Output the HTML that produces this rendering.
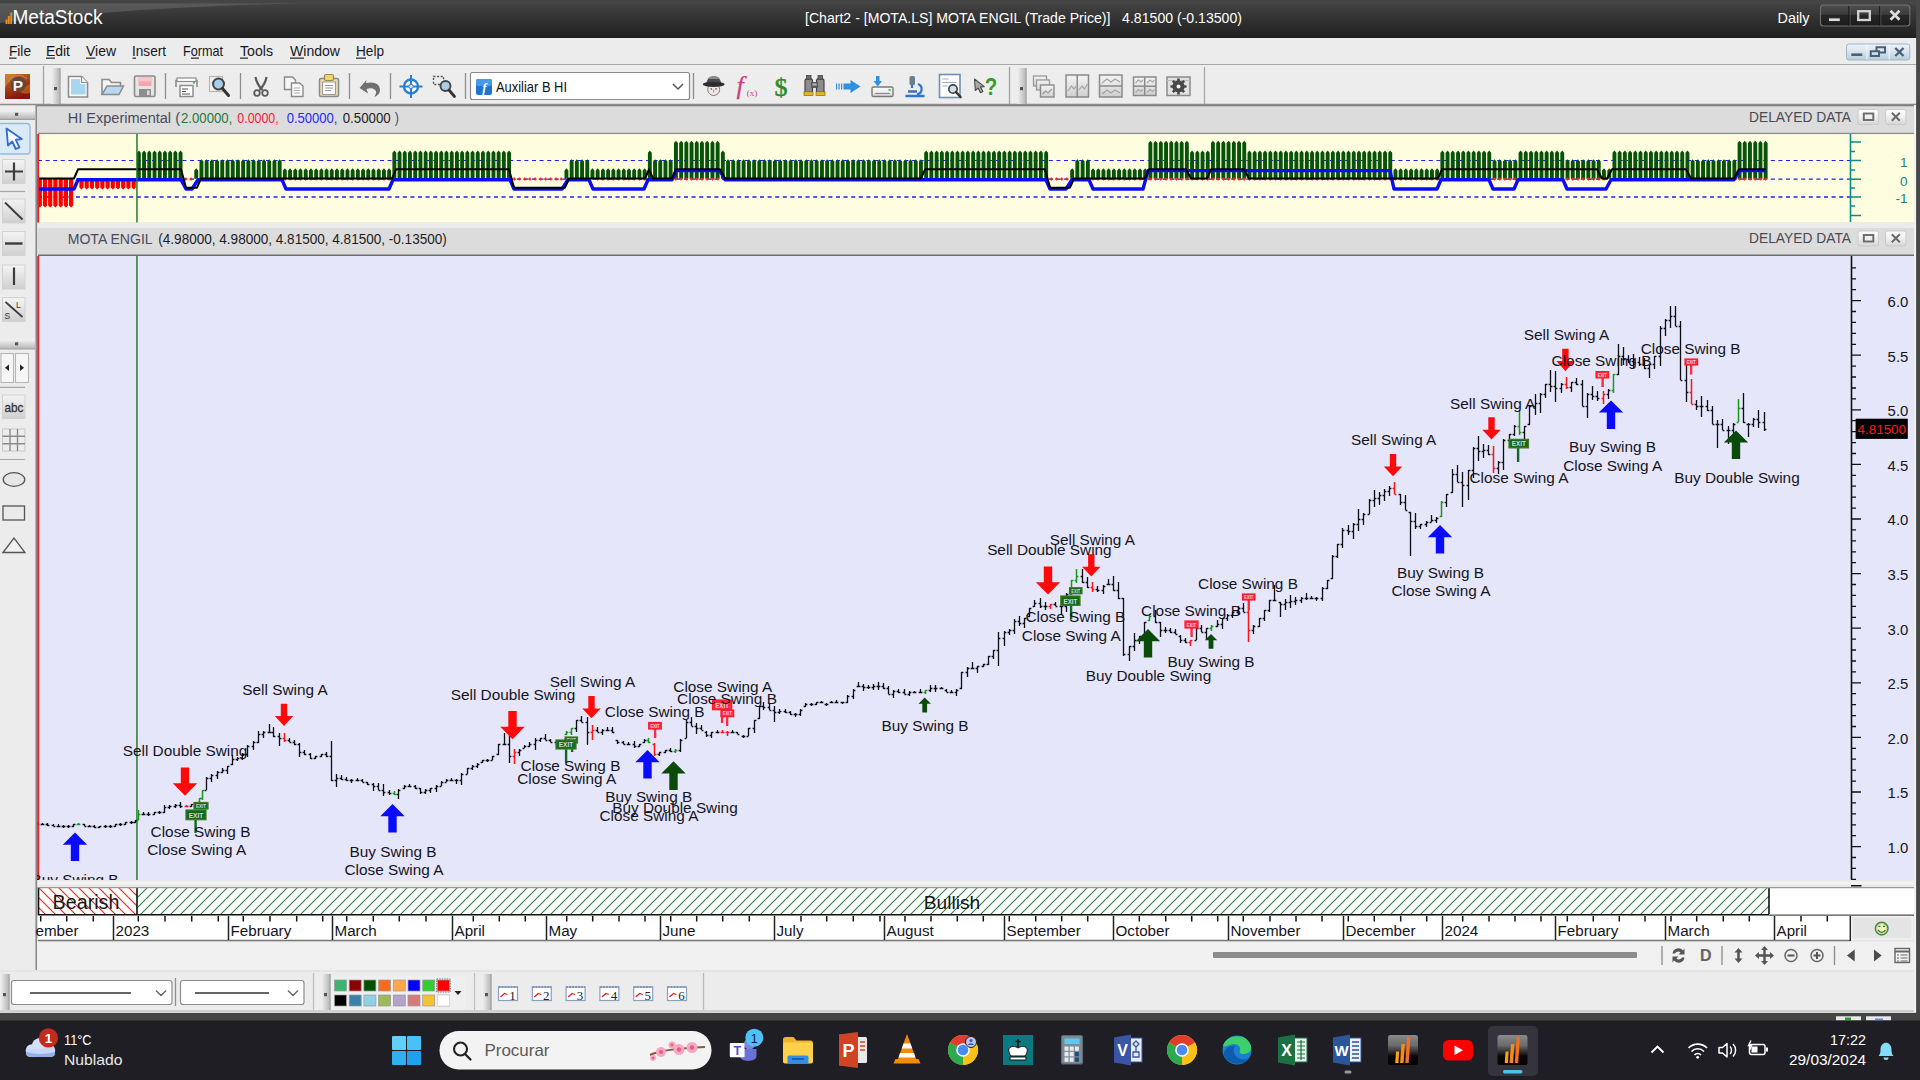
<!DOCTYPE html>
<html><head><meta charset="utf-8"><title>MetaStock</title>
<style>
html,body{margin:0;padding:0;width:1920px;height:1080px;overflow:hidden;background:#f0f0f0;font-family:"Liberation Sans", sans-serif}
</style></head><body>
<svg width="1920" height="1080" viewBox="0 0 1920 1080" style="position:absolute;left:0;top:0;font-family:'Liberation Sans',sans-serif"><defs>
<clipPath id="cpMain"><rect x="37" y="256" width="1814" height="624"/></clipPath>
<pattern id="hR" width="10" height="10" patternUnits="userSpaceOnUse" x="39" y="888"><path d="M-1 -1L11 11M-1 9L1 11M9 -1L11 1" stroke="#ff2020" stroke-width="1.1"/></pattern>
<pattern id="hG" width="10" height="10" patternUnits="userSpaceOnUse" x="137" y="888"><path d="M-1 11L11 -1M-1 1L1 -1M9 11L11 9" stroke="#2a7f3a" stroke-width="1.05"/></pattern>
<linearGradient id="gTitle" x1="0" y1="0" x2="0" y2="1"><stop offset="0" stop-color="#4a4a4a"/><stop offset=".09" stop-color="#4a4a4a"/><stop offset=".1" stop-color="#424242"/><stop offset=".6" stop-color="#2e2e2e"/><stop offset="1" stop-color="#1f1f1f"/></linearGradient>
<linearGradient id="gMS" x1="0" y1="0" x2="0" y2="1"><stop offset="0" stop-color="#8a8a8a"/><stop offset=".35" stop-color="#6a6a6a"/><stop offset=".7" stop-color="#0c0808"/><stop offset="1" stop-color="#050303"/></linearGradient>
<linearGradient id="gWB" x1="0" y1="0" x2="0" y2="1"><stop offset="0" stop-color="#505050"/><stop offset=".45" stop-color="#3a3a3a"/><stop offset=".5" stop-color="#262626"/><stop offset="1" stop-color="#1c1c1c"/></linearGradient>
<linearGradient id="gMDI" x1="0" y1="0" x2="0" y2="1"><stop offset="0" stop-color="#eef3f7"/><stop offset=".5" stop-color="#d8e3ea"/><stop offset="1" stop-color="#b9cddb"/></linearGradient>
<linearGradient id="gP" x1="0" y1="0" x2=".4" y2="1"><stop offset="0" stop-color="#c8701e"/><stop offset=".45" stop-color="#a8481a"/><stop offset="1" stop-color="#86160a"/></linearGradient>
<linearGradient id="gBtn2" x1="0" y1="0" x2="0" y2="1"><stop offset="0" stop-color="#fdfdfd"/><stop offset=".5" stop-color="#efefef"/><stop offset="1" stop-color="#d6d6d6"/></linearGradient>
<linearGradient id="gBtn" x1="0" y1="0" x2="0" y2="1"><stop offset="0" stop-color="#f4f4f4"/><stop offset="1" stop-color="#cfcfcf"/></linearGradient>
<linearGradient id="gGrip" x1="0" y1="0" x2="1" y2="0"><stop offset="0" stop-color="#f2f2f2"/><stop offset=".6" stop-color="#d0d0d0"/><stop offset="1" stop-color="#b8b8b8"/></linearGradient>
<linearGradient id="gGripH" x1="0" y1="0" x2="0" y2="1"><stop offset="0" stop-color="#f2f2f2"/><stop offset=".6" stop-color="#d0d0d0"/><stop offset="1" stop-color="#b8b8b8"/></linearGradient>
</defs><rect x="37" y="105.500" width="1877.500" height="836" fill="#dcdcdc"/><path d="M37 105.800H1915" stroke="#787878" stroke-width="1.500"/><rect x="38" y="106.500" width="1876" height="26.500" fill="#dcdcdc"/><path d="M38 133.300H1914" stroke="#8c8c8c" stroke-width="1.300"/><rect x="38" y="134.3" width="1876" height="88.2" fill="#fffde0"/><rect x="38" y="222.500" width="1876" height="5.500" fill="#ebebeb"/><rect x="38" y="228" width="1876" height="26.500" fill="#dcdcdc"/><path d="M38 255.200H1914" stroke="#6e6e6e" stroke-width="1.500"/><rect x="38" y="256" width="1876" height="624" fill="#e6e6fa"/><rect x="38" y="880" width="1876" height="7.500" fill="#e9e9e9"/><rect x="38" y="881.500" width="1876" height="3" fill="#f4f4f4"/><g font-size="15.2"><text x="67.7" y="122.7" fill="#4a4a5c" textLength="112.3" lengthAdjust="spacingAndGlyphs">HI Experimental (</text><text x="181" y="122.7" fill="#1f7a3a" textLength="51.3" lengthAdjust="spacingAndGlyphs">2.00000,</text><text x="237.3" y="122.7" fill="#ff1a3a" textLength="41.4" lengthAdjust="spacingAndGlyphs">0.0000,</text><text x="286.7" y="122.7" fill="#2a2aff" textLength="50.8" lengthAdjust="spacingAndGlyphs">0.50000,</text><text x="342.7" y="122.7" fill="#222" textLength="48" lengthAdjust="spacingAndGlyphs">0.50000</text><text x="394.8" y="122.7" fill="#4a4a5c" textLength="4.2" lengthAdjust="spacingAndGlyphs">)</text><text x="67.700" y="243.800" fill="#4a4a5c" textLength="85" lengthAdjust="spacingAndGlyphs">MOTA ENGIL</text><text x="158.300" y="243.800" fill="#1c1c24" textLength="288.500" lengthAdjust="spacingAndGlyphs">(4.98000, 4.98000, 4.81500, 4.81500, -0.13500)</text><text x="1749" y="121.8" fill="#4a4a52" textLength="102" lengthAdjust="spacingAndGlyphs">DELAYED DATA</text><text x="1749" y="243" fill="#4a4a52" textLength="102" lengthAdjust="spacingAndGlyphs">DELAYED DATA</text></g><rect x="1858" y="109.5" width="20.500" height="15" rx="2" fill="url(#gBtn2)" stroke="#c9c9c9" stroke-width="1"/><rect x="1885.500" y="109.5" width="20.500" height="15" rx="2" fill="url(#gBtn2)" stroke="#c9c9c9" stroke-width="1"/><rect x="1863.800" y="113.5" width="9.500" height="6.500" fill="none" stroke="#6a6a6a" stroke-width="1.900"/><path d="M1891.800 112.8l8 8M1899.800 112.8l-8 8" stroke="#6a6a6a" stroke-width="2"/><rect x="1858" y="231" width="20.500" height="15" rx="2" fill="url(#gBtn2)" stroke="#c9c9c9" stroke-width="1"/><rect x="1885.500" y="231" width="20.500" height="15" rx="2" fill="url(#gBtn2)" stroke="#c9c9c9" stroke-width="1"/><rect x="1863.800" y="235" width="9.500" height="6.500" fill="none" stroke="#6a6a6a" stroke-width="1.900"/><path d="M1891.800 234.3l8 8M1899.800 234.3l-8 8" stroke="#6a6a6a" stroke-width="2"/><rect x="0" y="0" width="1920" height="38" fill="url(#gTitle)"/><rect x="0" y="0" width="1920" height="3.5" fill="#454545"/><path d="M0 3.500H300C210 5 90 12 0 23Z" fill="#7a7a7a" fill-opacity=".42"/><path d="M6.5 24V19.5M8.8 24V16M11.2 24V12.5" stroke="#f08a1c" stroke-width="1.9"/><text x="12.5" y="23.6" font-size="19.5" fill="#fff" textLength="90" lengthAdjust="spacingAndGlyphs">MetaStock</text><text x="805" y="22.6" font-size="15" fill="#fff" textLength="437" lengthAdjust="spacingAndGlyphs" xml:space="preserve">[Chart2 - [MOTA.LS] MOTA ENGIL (Trade Price)]   4.81500 (-0.13500)</text><text x="1777.5" y="22.8" font-size="15" fill="#fff" textLength="32" lengthAdjust="spacingAndGlyphs">Daily</text><rect x="1820.500" y="5" width="89.300" height="21" rx="3" fill="url(#gWB)" stroke="#707070" stroke-width="1.100"/><path d="M1849 6V25.500M1879.800 6V25.500" stroke="#141414" stroke-width="1.200"/><path d="M1850.100 6V25.500M1880.900 6V25.500" stroke="#5a5a5a" stroke-width=".8"/><path d="M1829 19.700h10.800" stroke="#dcdcdc" stroke-width="2.700"/><rect x="1858.200" y="11.200" width="11.600" height="8.800" fill="none" stroke="#d4d4d4" stroke-width="2.300"/><path d="M1890.500 10.700l9 9M1899.500 10.700l-9 9" stroke="#dcdcdc" stroke-width="2.700"/><rect x="0" y="38" width="1920" height="26.5" fill="#ececec"/><path d="M0 64.5H1920" stroke="#a8a8a8" stroke-width="1.2"/><g font-size="14.6" fill="#16161c"><text x="9" y="56" textLength="22" lengthAdjust="spacingAndGlyphs">File</text><rect x="9" y="57.6" width="7.5" height="1.1" fill="#16161c"/><text x="46" y="56" textLength="24" lengthAdjust="spacingAndGlyphs">Edit</text><rect x="46" y="57.6" width="9" height="1.1" fill="#16161c"/><text x="86" y="56" textLength="30" lengthAdjust="spacingAndGlyphs">View</text><rect x="86" y="57.6" width="9.5" height="1.1" fill="#16161c"/><text x="132" y="56" textLength="34" lengthAdjust="spacingAndGlyphs">Insert</text><rect x="132.5" y="57.6" width="3.5" height="1.1" fill="#16161c"/><text x="183" y="56" textLength="40" lengthAdjust="spacingAndGlyphs">Format</text><rect x="191" y="57.6" width="8" height="1.1" fill="#16161c"/><text x="240" y="56" textLength="33" lengthAdjust="spacingAndGlyphs">Tools</text><rect x="240" y="57.6" width="8" height="1.1" fill="#16161c"/><text x="290" y="56" textLength="50" lengthAdjust="spacingAndGlyphs">Window</text><rect x="290" y="57.6" width="14" height="1.1" fill="#16161c"/><text x="356" y="56" textLength="28" lengthAdjust="spacingAndGlyphs">Help</text><rect x="356" y="57.6" width="10" height="1.1" fill="#16161c"/></g><rect x="1846.500" y="44" width="63.300" height="16" rx="2.500" fill="url(#gMDI)" stroke="#9db4c6" stroke-width="1"/><path d="M1867 44.500V59.500M1889.200 44.500V59.500" stroke="#f4f8fa" stroke-width="1"/><path d="M1851.300 54.700h11" stroke="#44607a" stroke-width="2.600"/><path d="M1870.800 51.300h8.200v4.700h-8.200zM1876.500 50.500v-3.300h8.500v5.300h-5" fill="none" stroke="#44607a" stroke-width="2"/><path d="M1895.300 48l8.200 8M1903.500 48l-8.200 8" stroke="#44607a" stroke-width="2.400"/><rect x="0" y="65" width="1920" height="40" fill="#ededed"/><path d="M0 104.6H1920" stroke="#8a8a8a" stroke-width="1.6"/><rect x="5" y="74" width="25" height="25" fill="url(#gP)"/><path d="M5 74h12c-5 3-9 8-12 14z" fill="#e08a2a" fill-opacity=".55"/><path d="M30 84v9c-6 2-12-1-15-6c5 2 10 0 15-3z" fill="#e0801a" fill-opacity=".5"/><circle cx="18.5" cy="84.5" r="7.8" fill="#4a4644" fill-opacity=".72"/><path d="M8 82c4-7 13-9 19-3" stroke="#b8a898" stroke-opacity=".5" stroke-width="1.2" fill="none"/><text x="18" y="91.3" font-size="15.5" font-weight="bold" fill="#f4f4f4" text-anchor="middle">P</text><path d="M43.5 66V104" stroke="#a2a2a2" stroke-width="1.3"/><rect x="51" y="68" width="8.5" height="36" fill="url(#gGrip)"/><path d="M60 68V104" stroke="#9c9c9c" stroke-width="1.3"/><rect x="54" y="87.0" width="3" height="3.2" fill="#555"/><path d="M165.5 73V99" stroke="#8e8e8e" stroke-width="1.3"/><path d="M240.5 73V99" stroke="#8e8e8e" stroke-width="1.3"/><path d="M349.5 73V99" stroke="#8e8e8e" stroke-width="1.3"/><path d="M390.5 73V99" stroke="#8e8e8e" stroke-width="1.3"/><path d="M465.5 73V99" stroke="#8e8e8e" stroke-width="1.3"/><path d="M68.5 76.5h13l6 6v14.5h-19z" fill="#fcfcfc" stroke="#8c8c8c" stroke-width="1.6"/><path d="M81.5 76.5v6h6" fill="#f4f4f4" stroke="#8c8c8c" stroke-width="1.2"/><path d="M71 79h9v5h5.500v10.500h-14.500z" fill="#a8d6ee"/><path d="M102 94V79.500h7l2.500 3h9v4" fill="#f4f4f4" stroke="#8c8c8c" stroke-width="1.6"/><path d="M102 94.500l5-8.500h16.500l-4.500 8.500z" fill="#b9d7ee" stroke="#8c8c8c" stroke-width="1.5"/><rect x="134.5" y="76" width="20.500" height="20.500" rx="1.500" fill="#e4e4e4" stroke="#8c8c8c" stroke-width="1.6"/><rect x="138.500" y="77.500" width="13" height="8.500" fill="#f4a6ae"/><rect x="138.500" y="77.500" width="13" height="4" fill="#f8c4c8"/><rect x="139" y="89" width="12" height="7" fill="#8e8e8e"/><rect x="147" y="90.500" width="2.500" height="4.500" fill="#ddd"/><path d="M176 87v-6.500h21v6.500" fill="#f2f2f2" stroke="#8c8c8c" stroke-width="1.6"/><rect x="177" y="78" width="19" height="3.500" fill="#fff" stroke="#8c8c8c" stroke-width="1.2"/><rect x="180" y="85.500" width="13" height="11" fill="#fff" stroke="#8c8c8c" stroke-width="1.5"/><path d="M182 89h6M182 91.500h4M182 94h8" stroke="#555" stroke-width="1"/><rect x="193" y="82" width="2" height="1.500" fill="#3db54a"/><rect x="209.500" y="76.500" width="13" height="15" fill="#efefef" stroke="#b5b5b5" stroke-width="1.2"/><circle cx="218.500" cy="84" r="5.500" fill="#a9cdea" stroke="#444" stroke-width="2"/><path d="M222.500 88.500l6 7" stroke="#333" stroke-width="3" stroke-linecap="round"/><path d="M255.500 77c1 6 3 9 7 13M266.500 77c-1 6-3 9-7 13" stroke="#5a5a5a" stroke-width="2.200" fill="none"/><circle cx="257" cy="93" r="2.800" fill="none" stroke="#5a5a5a" stroke-width="1.800"/><circle cx="265" cy="93" r="2.800" fill="none" stroke="#5a5a5a" stroke-width="1.800"/><path d="M284.500 77h8l3 3v9.500h-11z" fill="#f6f6f6" stroke="#8a8a8a" stroke-width="1.4"/><path d="M291.500 83h8l3.500 3v10.500h-11.500z" fill="#fafafa" stroke="#8a8a8a" stroke-width="1.4"/><path d="M294 88h6M294 90.500h6M294 93h6" stroke="#aaa" stroke-width="1"/><rect x="319.500" y="78.500" width="19" height="18" rx="1.500" fill="#e9dcb0" stroke="#8a8a8a" stroke-width="1.5"/><rect x="324.500" y="74.500" width="9" height="6" rx="1.500" fill="#f3d66b" stroke="#9a8a4a" stroke-width="1.2"/><rect x="322.500" y="82" width="13" height="12.500" fill="#fbfbfb" stroke="#9a9a9a" stroke-width="1"/><path d="M325 85.500h8M325 88h8M325 90.500h6" stroke="#999" stroke-width="1"/><path d="M366 83c8-2 14.500 1 14 7.500c-.3 3-2.500 5.500-6 6.500c2.500-3 3-6 .5-7.500c-2-1.500-5-1.500-8-.5l1.500 4.500l-8.500-5.500l7-8z" fill="#707070"/><circle cx="411" cy="86.500" r="7" fill="#fff" stroke="#2a7fd0" stroke-width="2.400"/><path d="M411 75v23M399.500 86.500h23" stroke="#2a7fd0" stroke-width="2"/><circle cx="411" cy="86.500" r="2.200" fill="#cfe4f6" stroke="#2a7fd0" stroke-width="1"/><rect x="433.500" y="76.500" width="10" height="8" fill="none" stroke="#555" stroke-width="1.400" stroke-dasharray="2 1.600"/><circle cx="445.500" cy="86" r="5" fill="#a9cdea" stroke="#444" stroke-width="1.900"/><path d="M449 90l5.500 6.500" stroke="#333" stroke-width="2.800" stroke-linecap="round"/><circle cx="713.700" cy="89.500" r="6" fill="#f3e6e2" stroke="#8a7a78" stroke-width="1"/><path d="M706.500 84c-.5-10 15-10 14.500 0z" fill="#4c4c4c"/><path d="M707.500 79c2-4 10.500-4 12.500 0z" fill="#8a8a8a"/><ellipse cx="713.700" cy="84.300" rx="11" ry="2.600" fill="#2e2e2e"/><circle cx="711.300" cy="88.800" r=".9" fill="#3a6ab0"/><circle cx="716" cy="88.800" r=".9" fill="#3a6ab0"/><path d="M713.700 89.500v3" stroke="#a08a86" stroke-width=".9"/><text x="736.500" y="93.500" font-size="26" font-style="italic" fill="#d23a80" stroke="#d23a80" stroke-width=".25" font-family="Liberation Serif, serif">f</text><text x="746.800" y="96" font-size="9" fill="#d23a80" font-family="Liberation Serif, serif">(x)</text><text x="781" y="95.500" font-size="26" fill="#2a8a2a" stroke="#2a8a2a" stroke-width=".5" text-anchor="middle" font-family="Liberation Serif, serif">$</text><rect x="805" y="78.500" width="7.500" height="15" rx="2.500" fill="#8c8c8c" stroke="#444" stroke-width="1.200"/><rect x="816.500" y="78.500" width="7.500" height="15" rx="2.500" fill="#8c8c8c" stroke="#444" stroke-width="1.200"/><rect x="811" y="82" width="7" height="6" fill="#5a5a5a"/><rect x="812.500" y="83.500" width="4" height="2" fill="#bdbdbd"/><rect x="806.500" y="75.500" width="4.500" height="4" fill="#6a6a6a" stroke="#444" stroke-width=".8"/><rect x="818" y="75.500" width="4.500" height="4" fill="#6a6a6a" stroke="#444" stroke-width=".8"/><rect x="804" y="91.800" width="9" height="3.600" fill="#e8b820" stroke="#7a6a20" stroke-width=".7"/><rect x="816" y="91.800" width="9" height="3.600" fill="#e8b820" stroke="#7a6a20" stroke-width=".7"/><path d="M836 83.500h1.200v6h-1.200zM838.500 83.500h1.200v6h-1.200zM841 83.500h1.200v6h-1.200zM843.500 83.500h7v-3.500l10 6.500l-10 6.500v-3.500h-7z" fill="#2f8fe0"/><rect x="872" y="87" width="21" height="9.500" rx="1.500" fill="url(#gBtn2)" stroke="#7a7a7a" stroke-width="1.400"/><rect x="888.500" y="89" width="2.200" height="1.800" fill="#4aba4a"/><path d="M875 93.500h15" stroke="#8a8a8a" stroke-width="1.200"/><path d="M876 76h3.500v5h2.500l-4.200 5.500l-4.300-5.500h2.500z" fill="#2f8fe0"/><rect x="909.500" y="76" width="5.500" height="9" rx="1.500" fill="#6b7f94"/><path d="M912 85v3M918 84c5 2 5 9-1 10.500" stroke="#2f74c8" stroke-width="2.200" fill="none"/><path d="M905.500 96h19M908 91.500h9" stroke="#2f74c8" stroke-width="2.400"/><rect x="939.500" y="74.500" width="20.500" height="23" fill="#fff" stroke="#6f8fb5" stroke-width="1.600"/><path d="M942.500 79h6M942.500 82.500h14M942.500 86h5" stroke="#9ab0c8" stroke-width="1.200"/><circle cx="953" cy="89" r="4.200" fill="#cfe0f0" stroke="#444" stroke-width="1.700"/><path d="M956 92l4.500 5" stroke="#333" stroke-width="2.500" stroke-linecap="round"/><path d="M974.500 79l.800 11.500l2.800-2.500l2.400 4.800l2.400-1.200l-2.400-4.700l3.800-.3z" fill="#a8a8a8" stroke="#4a4a4a" stroke-width="1.100" stroke-linejoin="round"/><text x="991" y="94.800" font-size="24.500" font-weight="bold" fill="#3a9a2e" text-anchor="middle" textLength="12.500" lengthAdjust="spacingAndGlyphs">?</text><rect x="1033.500" y="76" width="13" height="10" fill="url(#gBtn)" stroke="#9a9a9a" stroke-width="1.300"/><rect x="1036.500" y="80" width="13" height="10" fill="url(#gBtn)" stroke="#9a9a9a" stroke-width="1.300"/><rect x="1040.500" y="85" width="13.500" height="12" fill="url(#gBtn)" stroke="#8a8a8a" stroke-width="1.400"/><path d="M1042.500 94l3-3l2.500 2l4-4" stroke="#9a9a9a" stroke-width="1.200" fill="none"/><rect x="1066" y="75" width="22.500" height="22" fill="url(#gBtn)" stroke="#8a8a8a" stroke-width="1.500"/><path d="M1077.200 75v22" stroke="#8a8a8a" stroke-width="1.500"/><path d="M1068 91l3.500-5l2.500 3l2-3M1079 90l3-4l2.500 3l3-5" stroke="#a5a5a5" stroke-width="1.200" fill="none"/><rect x="1099.500" y="75" width="22.500" height="22" fill="url(#gBtn)" stroke="#8a8a8a" stroke-width="1.500"/><path d="M1099.500 86h22.500" stroke="#8a8a8a" stroke-width="1.500"/><path d="M1102 83l5-4l4 3l4-3l5 3M1102 94l5-4l4 3l4-3l5 3" stroke="#a5a5a5" stroke-width="1.200" fill="none"/><rect x="1133.500" y="77" width="22.500" height="18.500" fill="url(#gBtn)" stroke="#8a8a8a" stroke-width="1.500"/><path d="M1144.700 77v18.500M1133.500 86.200h22.500" stroke="#8a8a8a" stroke-width="1.500"/><path d="M1135.500 83l3-3l2.500 2l2-2M1147 83l3-3l2.500 2l2-2M1135.500 92.500l3-3l2.500 2l2-2M1147 92.500l3-3l2.500 2l2-2" stroke="#a5a5a5" stroke-width="1.100" fill="none"/><rect x="1167" y="77" width="23" height="18.500" fill="#e2e2e2" stroke="#8a8a8a" stroke-width="1.500"/><path d="M1167 80.500h23" stroke="#bbb" stroke-width="1"/><circle cx="1178.500" cy="86.500" r="4.600" fill="none" stroke="#484848" stroke-width="3"/><path d="M1178.500 78.500v16M1170.500 86.500h16M1172.800 80.800l11.400 11.400M1184.200 80.800l-11.400 11.400" stroke="#484848" stroke-width="2.600"/><circle cx="1178.500" cy="86.500" r="2" fill="#f4f4f4"/><rect x="470.5" y="72.5" width="219" height="27" rx="2" fill="#fff" stroke="#8a8a8a" stroke-width="1.2"/><rect x="476" y="79" width="16" height="16" rx="2" fill="#1f74d4"/><rect x="476" y="79" width="16" height="7" rx="2" fill="#4a98ea"/><text x="484.5" y="92" font-size="13" font-style="italic" font-weight="bold" fill="#fff" text-anchor="middle" font-family="Liberation Serif, serif">f</text><text x="496" y="91.5" font-size="14.6" fill="#111" textLength="71" lengthAdjust="spacingAndGlyphs">Auxiliar B HI</text><path d="M673 84l5 5l5-5" fill="none" stroke="#555" stroke-width="1.5"/><path d="M693.5 73V99" stroke="#8e8e8e" stroke-width="1.3"/><path d="M1009.5 67V104" stroke="#a2a2a2" stroke-width="1.3"/><rect x="1017" y="68" width="8.5" height="36" fill="url(#gGrip)"/><path d="M1026 68V104" stroke="#9c9c9c" stroke-width="1.3"/><rect x="1020" y="87.0" width="3" height="3.2" fill="#555"/><path d="M1204.5 67V104" stroke="#a8a8a8" stroke-width="1.3"/><rect x="0" y="105.500" width="36" height="865" fill="#ececec"/><path d="M36.200 105V970" stroke="#8c8c8c" stroke-width="1.600"/><rect x="0" y="110" width="35" height="9" fill="url(#gGripH)"/><path d="M0 119.3H35" stroke="#a0a0a0" stroke-width="1.200"/><rect x="15" y="112.8" width="3.200" height="3" fill="#555"/><rect x="0" y="339.5" width="35" height="9" fill="url(#gGripH)"/><path d="M0 348.8H35" stroke="#a0a0a0" stroke-width="1.200"/><rect x="15" y="342.3" width="3.200" height="3" fill="#555"/><rect x="-2" y="123.500" width="32" height="30.500" rx="3" fill="#dbeaf9" stroke="#8fbbe8" stroke-width="1.300"/><path d="M6.500 128.500l1.500 17l4.200-4l3.600 7.500l3.600-1.700l-3.600-7.500l6-.8z" fill="#fff" stroke="#2f6fd0" stroke-width="1.900" stroke-linejoin="round"/><rect x="2.500" y="159.5" width="22.500" height="24" fill="url(#gBtn)" stroke="#d2d2d2" stroke-width="1"/><path d="M14 162.500v18M5 171.500h18" stroke="#3c3c3c" stroke-width="2.200"/><path d="M0 191.500H25" stroke="#a5a5a5" stroke-width="1.200"/><rect x="2.500" y="199" width="22.500" height="24" fill="url(#gBtn)" stroke="#d2d2d2" stroke-width="1"/><path d="M5 202.500l17.500 17" stroke="#3c3c3c" stroke-width="1.900"/><rect x="2.500" y="231.5" width="22.500" height="24" fill="url(#gBtn)" stroke="#d2d2d2" stroke-width="1"/><path d="M5 243.500h17.500" stroke="#3c3c3c" stroke-width="2.400"/><rect x="2.500" y="265" width="22.500" height="24" fill="url(#gBtn)" stroke="#d2d2d2" stroke-width="1"/><path d="M14 267.500v17.500" stroke="#3c3c3c" stroke-width="2.200"/><rect x="2.500" y="297.5" width="22.500" height="24" fill="url(#gBtn)" stroke="#d2d2d2" stroke-width="1"/><path d="M5.500 302l17 15" stroke="#3c3c3c" stroke-width="1.700"/><text x="16" y="308" font-size="8.500" fill="#333">L</text><text x="4.500" y="319" font-size="8.500" fill="#333">S</text><rect x="1" y="353.500" width="12.500" height="29" fill="#f6f6f6" stroke="#b8b8b8" stroke-width="1.100"/><rect x="15.500" y="353.500" width="13" height="29" fill="#f6f6f6" stroke="#b8b8b8" stroke-width="1.100"/><path d="M9 364.500v6.500l-4-3.200zM20 364.500v6.500l4-3.200z" fill="#222"/><rect x="2.500" y="395" width="22.500" height="23.5" fill="url(#gBtn)" stroke="#d2d2d2" stroke-width="1"/><text x="14" y="412" font-size="13" fill="#333" stroke="#333" stroke-width=".3" text-anchor="middle" textLength="19" lengthAdjust="spacingAndGlyphs">abc</text><rect x="2.5" y="429" width="22.5" height="22" fill="#ececec" stroke="#c8c8c8" stroke-width="1"/><path d="M2.5 436.3h22.5M2.5 443.700h22.5M10 429v22M17.5 429v22" stroke="#8a8a8a" stroke-width="1.4"/><path d="M0 459.5H25M0 387.3H25" stroke="#a5a5a5" stroke-width="1.2"/><ellipse cx="14" cy="479.500" rx="10.800" ry="6.800" fill="#e6e6e6" stroke="#555" stroke-width="1.300"/><rect x="3" y="506" width="21.500" height="14" fill="#eaeaea" stroke="#555" stroke-width="1.300"/><path d="M3 552.500l11-14.500l11 14.500z" fill="#f0f0f0" stroke="#555" stroke-width="1.300"/><rect x="37" y="941.500" width="1877.500" height="29" fill="#f0f0f0"/><rect x="1850.500" y="916" width="63.500" height="24.500" fill="#e9e9e9"/><rect x="1852" y="917" width="60" height="22" fill="#e4e4e4" stroke="#f6f6f6" stroke-width="1"/><circle cx="1881.700" cy="928.600" r="6.300" fill="#eef0cc" stroke="#3c8a5a" stroke-width="1.500"/><circle cx="1881.700" cy="928.600" r="5" fill="none" stroke="#d8c84a" stroke-width="1"/><path d="M1878 930c2 3.200 5.400 3.200 7.400 0" stroke="#2a7a3a" stroke-width="1.300" fill="none"/><path d="M1878.500 926.400h2M1883 926.400h2" stroke="#2a7a3a" stroke-width="1.300"/><rect x="1213" y="952" width="424" height="6" rx="1" fill="#8c8c8c"/><path d="M1662 946V965" stroke="#8a8a8a" stroke-width="1.300"/><path d="M1722 946V965" stroke="#8a8a8a" stroke-width="1.300"/><path d="M1834.5 946V965" stroke="#8a8a8a" stroke-width="1.300"/><path d="M1672.500 953.500a6 6 0 0 1 10.500-3l1.500-2v6h-6l2-2a3.600 3.600 0 0 0-5.500 1zM1684.500 957.500a6 6 0 0 1-10.500 3l-1.500 2v-6h6l-2 2a3.600 3.600 0 0 0 5.500-1z" fill="#555"/><text x="1705.800" y="961" font-size="16" font-weight="bold" fill="#626262" text-anchor="middle">D</text><path d="M1738.500 948l4 4.500h-2.700v6h2.700l-4 4.500l-4-4.500h2.700v-6h-2.700z" fill="#555"/><path d="M1764.500 946l3.500 4h-2.300v4.300h4.300v-2.300l4 3.500l-4 3.500v-2.300h-4.300v4.300h2.300l-3.500 4l-3.500-4h2.300v-4.300h-4.300v2.300l-4-3.500l4-3.500v2.300h4.300v-4.300h-2.300z" fill="#555"/><circle cx="1791" cy="955.500" r="6" fill="none" stroke="#666" stroke-width="1.500"/><path d="M1787.500 955.500h7" stroke="#555" stroke-width="2"/><circle cx="1817" cy="955.500" r="6" fill="none" stroke="#666" stroke-width="1.500"/><path d="M1813.500 955.500h7M1817 952v7" stroke="#555" stroke-width="2"/><path d="M1854.700 949.500v12l-7.700-6zM1874 949.500v12l7.700-6z" fill="#4c4c4c"/><rect x="1895" y="948.500" width="14.500" height="14" fill="#f4f4f4" stroke="#666" stroke-width="1.400"/><path d="M1895 951.500h14.500" stroke="#666" stroke-width="2"/><path d="M1897 955h2M1900.500 955h7M1897 958h2M1900.500 958h7M1897 961h2M1900.500 961h7" stroke="#666" stroke-width="1.100"/><rect x="0" y="970.500" width="1915" height="41.500" fill="#ececec"/><path d="M0 971H1915" stroke="#dcdcdc" stroke-width="1.200"/><path d="M0 1011.300H1915" stroke="#b4b4b4" stroke-width="1.400"/><rect x="1914" y="105" width="2.200" height="907" fill="#f2f2f2"/><rect x="0" y="974" width="8.5" height="36" fill="url(#gGrip)"/><path d="M9 974V1010" stroke="#9c9c9c" stroke-width="1.3"/><rect x="3" y="993.0" width="3" height="3.2" fill="#555"/><rect x="11.5" y="980.500" width="160.5" height="24" rx="2.500" fill="#fff" stroke="#8e8e8e" stroke-width="1.200"/><rect x="180.5" y="980.500" width="123.5" height="24" rx="2.500" fill="#fff" stroke="#8e8e8e" stroke-width="1.200"/><path d="M30 993h101" stroke="#333" stroke-width="1.300"/><path d="M195 993h74" stroke="#333" stroke-width="1.300"/><path d="M156 990.500l5 5l5-5M288 990.500l5 5l5-5" fill="none" stroke="#666" stroke-width="1.400"/><path d="M175.500 978V1006" stroke="#8e8e8e" stroke-width="1.300"/><path d="M313.500 973V1010" stroke="#c0c0c0" stroke-width="1.300"/><rect x="321" y="974" width="8.5" height="36" fill="url(#gGrip)"/><path d="M330 974V1010" stroke="#9c9c9c" stroke-width="1.3"/><rect x="324" y="993.0" width="3" height="3.2" fill="#555"/><rect x="331.500" y="976.500" width="134" height="33" fill="#efefef"/><rect x="334.5" y="980" width="12" height="11" fill="#3cb371" stroke="#9c9c9c" stroke-width=".7"/><rect x="349.2" y="980" width="12" height="11" fill="#8b0000" stroke="#9c9c9c" stroke-width=".7"/><rect x="363.9" y="980" width="12" height="11" fill="#005000" stroke="#9c9c9c" stroke-width=".7"/><rect x="378.6" y="980" width="12" height="11" fill="#ff6a1a" stroke="#9c9c9c" stroke-width=".7"/><rect x="393.3" y="980" width="12" height="11" fill="#ffa64d" stroke="#9c9c9c" stroke-width=".7"/><rect x="408" y="980" width="12" height="11" fill="#0000ff" stroke="#9c9c9c" stroke-width=".7"/><rect x="422.7" y="980" width="12" height="11" fill="#32cd32" stroke="#9c9c9c" stroke-width=".7"/><rect x="437.4" y="980" width="12" height="11" fill="#ff0000" stroke="#9c9c9c" stroke-width=".7"/><rect x="334.5" y="995" width="12" height="11" fill="#000000" stroke="#9c9c9c" stroke-width=".7"/><rect x="349.2" y="995" width="12" height="11" fill="#3a80a8" stroke="#9c9c9c" stroke-width=".7"/><rect x="363.9" y="995" width="12" height="11" fill="#8fd0e4" stroke="#9c9c9c" stroke-width=".7"/><rect x="378.6" y="995" width="12" height="11" fill="#9cbb58" stroke="#9c9c9c" stroke-width=".7"/><rect x="393.3" y="995" width="12" height="11" fill="#b3a2cc" stroke="#9c9c9c" stroke-width=".7"/><rect x="408" y="995" width="12" height="11" fill="#d67b7b" stroke="#9c9c9c" stroke-width=".7"/><rect x="422.7" y="995" width="12" height="11" fill="#f4c430" stroke="#9c9c9c" stroke-width=".7"/><rect x="437.4" y="995" width="12" height="11" fill="#ffffff" stroke="#9c9c9c" stroke-width=".7"/><rect x="436.700" y="979" width="13.500" height="13" fill="none" stroke="#777" stroke-width="1" stroke-dasharray="1.500 1"/><rect x="437.400" y="995" width="12" height="11" fill="#fff" stroke="#ddd" stroke-width=".8"/><path d="M454.500 991h7l-3.500 4z" fill="#222"/><path d="M474.500 973V1010" stroke="#c0c0c0" stroke-width="1.300"/><rect x="482" y="974" width="8.5" height="36" fill="url(#gGrip)"/><path d="M491 974V1010" stroke="#9c9c9c" stroke-width="1.3"/><rect x="485" y="993.0" width="3" height="3.2" fill="#555"/><rect x="498.5" y="987" width="19" height="13.500" fill="#fff" stroke="#8aa0c0" stroke-width="1.200"/><path d="M498.5 987h19" stroke="#7a96c0" stroke-width="2" stroke-dasharray="2 1"/><path d="M500.5 997l4-3.500l3 1" stroke="#e02020" stroke-width="1.300" fill="none"/><text x="512.5" y="999.500" font-size="13" fill="#222" text-anchor="middle" font-family="Liberation Serif, serif">1</text><rect x="532.3" y="987" width="19" height="13.500" fill="#fff" stroke="#8aa0c0" stroke-width="1.200"/><path d="M532.3 987h19" stroke="#7a96c0" stroke-width="2" stroke-dasharray="2 1"/><path d="M534.3 997l4-3.500l3 1" stroke="#e02020" stroke-width="1.300" fill="none"/><text x="546.3" y="999.500" font-size="13" fill="#222" text-anchor="middle" font-family="Liberation Serif, serif">2</text><rect x="566.1" y="987" width="19" height="13.500" fill="#fff" stroke="#8aa0c0" stroke-width="1.200"/><path d="M566.1 987h19" stroke="#7a96c0" stroke-width="2" stroke-dasharray="2 1"/><path d="M568.1 997l4-3.500l3 1" stroke="#e02020" stroke-width="1.300" fill="none"/><text x="580.1" y="999.500" font-size="13" fill="#222" text-anchor="middle" font-family="Liberation Serif, serif">3</text><rect x="599.9" y="987" width="19" height="13.500" fill="#fff" stroke="#8aa0c0" stroke-width="1.200"/><path d="M599.9 987h19" stroke="#7a96c0" stroke-width="2" stroke-dasharray="2 1"/><path d="M601.9 997l4-3.500l3 1" stroke="#e02020" stroke-width="1.300" fill="none"/><text x="613.9" y="999.500" font-size="13" fill="#222" text-anchor="middle" font-family="Liberation Serif, serif">4</text><rect x="633.7" y="987" width="19" height="13.500" fill="#fff" stroke="#8aa0c0" stroke-width="1.200"/><path d="M633.7 987h19" stroke="#7a96c0" stroke-width="2" stroke-dasharray="2 1"/><path d="M635.7 997l4-3.500l3 1" stroke="#e02020" stroke-width="1.300" fill="none"/><text x="647.7" y="999.500" font-size="13" fill="#222" text-anchor="middle" font-family="Liberation Serif, serif">5</text><rect x="667.5" y="987" width="19" height="13.500" fill="#fff" stroke="#8aa0c0" stroke-width="1.200"/><path d="M667.5 987h19" stroke="#7a96c0" stroke-width="2" stroke-dasharray="2 1"/><path d="M669.5 997l4-3.500l3 1" stroke="#e02020" stroke-width="1.300" fill="none"/><text x="681.5" y="999.500" font-size="13" fill="#222" text-anchor="middle" font-family="Liberation Serif, serif">6</text><path d="M703.500 973V1010" stroke="#b8b8b8" stroke-width="1.300"/><rect x="1916.100" y="0" width="3.900" height="1021" fill="#484848"/><rect x="0" y="1012" width="1920" height="9" fill="#444444"/><rect x="0" y="1011.600" width="1916" height="1.200" fill="#fafafa"/><rect x="0" y="1020.500" width="1920" height="60" fill="#201e25"/><rect x="1836" y="1016.300" width="25" height="3.900" fill="#e4ece4"/><rect x="1866" y="1016.300" width="25" height="3.900" fill="#e6e8ee"/><rect x="1845" y="1017.500" width="6" height="2.700" fill="#2a9a2a"/><rect x="1875" y="1018.500" width="8" height="1.700" fill="#6a8ad0"/><circle cx="32" cy="1050.500" r="6.300" fill="#d3e0f8"/><circle cx="40.500" cy="1046.500" r="8.800" fill="#d3e0f8"/><circle cx="49" cy="1050.500" r="6.200" fill="#c6d6f5"/><rect x="26" y="1049" width="29" height="7.700" rx="3.800" fill="#c6d6f5"/><path d="M26.500 1052c8 2.500 20 2.500 28.500 0c.5 3-1.500 4.700-4 4.700h-21c-2.500 0-4-2-3.500-4.700z" fill="#8fb0ea"/><circle cx="48.400" cy="1037.900" r="9.600" fill="#c42b1c"/><text x="48.400" y="1042.800" font-size="13.500" font-weight="bold" fill="#fff" text-anchor="middle">1</text><text x="64" y="1045" font-size="15" fill="#fff" textLength="27.500" lengthAdjust="spacingAndGlyphs">11°C</text><text x="64" y="1065" font-size="15" fill="#e8e8e8" textLength="58.500" lengthAdjust="spacingAndGlyphs">Nublado</text><rect x="392" y="1036" width="14" height="14" rx="1" fill="#5ed0fb"/><rect x="407" y="1036" width="14" height="14" rx="1" fill="#46c2f8"/><rect x="392" y="1051" width="14" height="14" rx="1" fill="#2fb0f2"/><rect x="407" y="1051" width="14" height="14" rx="1" fill="#1fa2ee"/><rect x="439.500" y="1031" width="272" height="38.500" rx="19.200" fill="#f3f3f3"/><circle cx="460.500" cy="1049" r="6.500" fill="none" stroke="#222" stroke-width="2.100"/><path d="M465 1054l5.500 5.500" stroke="#222" stroke-width="2.300" stroke-linecap="round"/><text x="484.500" y="1056" font-size="16.500" fill="#5a5a5a" textLength="65" lengthAdjust="spacingAndGlyphs">Procurar</text><path d="M650 1055c10-5 30-7 55-8" stroke="#8a5a3a" stroke-width="2.200" fill="none"/><circle cx="661" cy="1052" r="5" fill="#f7a8c0"/><circle cx="661" cy="1052" r="2.0" fill="#e0608a"/><circle cx="679" cy="1049.5" r="5.5" fill="#f7a8c0"/><circle cx="679" cy="1049.5" r="2.2" fill="#e0608a"/><circle cx="692" cy="1047.5" r="5.5" fill="#f7a8c0"/><circle cx="692" cy="1047.5" r="2.2" fill="#e0608a"/><circle cx="653" cy="1058" r="3" fill="#f7a8c0"/><circle cx="653" cy="1058" r="1.2000000000000002" fill="#e0608a"/><circle cx="672" cy="1045" r="3.5" fill="#f7a8c0"/><circle cx="672" cy="1045" r="1.4000000000000001" fill="#e0608a"/><circle cx="749.500" cy="1044" r="5.500" fill="#7b83eb"/><path d="M740 1049h16.500v7c0 6.500-16.500 6.500-16.500 0z" fill="#6a70d8"/><rect x="729.800" y="1043" width="14.800" height="14.200" rx="1" fill="#fbfbff"/><text x="737.200" y="1055" font-size="12.500" font-weight="bold" fill="#4f52c8" text-anchor="middle">T</text><circle cx="754.300" cy="1037.700" r="9" fill="#4cc2f8"/><text x="754.300" y="1042.500" font-size="12.500" fill="#10203a" text-anchor="middle">1</text><path d="M783 1039.500c0-1.500 1-2.500 2.500-2.500h8l3 3.500h14c1.500 0 2.500 1 2.500 2.500v4h-30z" fill="#f0b429"/><rect x="783" y="1042.500" width="30" height="21" rx="2" fill="#ffd04a"/><rect x="787.500" y="1055.500" width="21" height="8" rx="1.500" fill="#2f8fe8"/><rect x="792" y="1058" width="12" height="2" fill="#1a5fb0"/><rect x="845" y="1037" width="22" height="26" rx="1.500" fill="#e8e8e8"/><rect x="839" y="1034.500" width="19" height="31" fill="#d04423"/><path d="M839 1034.500l19-2.500v36l-19-2.500z" fill="#d04423"/><text x="848.500" y="1056.500" font-size="18" font-weight="bold" fill="#fff" text-anchor="middle">P</text><path d="M860 1042h5M860 1046h5M860 1050h5" stroke="#d04423" stroke-width="1.500"/><path d="M907 1034l9 25h-18z" fill="#f48b00"/><path d="M903.500 1043.500h7l1.800 5h-10.600zM900 1053h14l1.500 4.500h-17z" fill="#fff"/><path d="M895.500 1059h23l2 4.500h-27z" fill="#f48b00"/><circle cx="963" cy="1050" r="15" fill="#fbc116"/><path d="M963 1050L950 1042.5A15 15 0 0 1 976 1042.5z" fill="#e33b2e"/><path d="M963 1050L963 1065A15 15 0 0 1 950 1042.5z" fill="#2da94f"/><path d="M963 1050L976 1042.5A15 15 0 0 1 963 1065z" fill="#fbc116"/><circle cx="963" cy="1050" r="6.800" fill="#fff"/><circle cx="963" cy="1050" r="5.300" fill="#4a8af4"/><circle cx="971" cy="1042" r="5.500" fill="#b8c8f0" stroke="#211f27" stroke-width="1"/><circle cx="971" cy="1040.500" r="1.600" fill="#3a5ab0"/><path d="M968 1045c.5-2.500 5.500-2.500 6 0z" fill="#3a5ab0"/><rect x="1003" y="1035" width="30" height="30" fill="#0a7a80"/><path d="M1010 1060h16v-3h-16zM1011 1056c-6-8 1-12 7-8c6-4 13 0 7 8z" fill="#fff" stroke="#111" stroke-width="1"/><path d="M1018 1047v-8M1015.500 1041.500h5" stroke="#111" stroke-width="1.600"/><rect x="1061.500" y="1035.500" width="21" height="28.500" rx="2" fill="#7f8a96" stroke="#5d6873" stroke-width="1.200"/><rect x="1064.500" y="1038.500" width="15" height="5.500" fill="#5ec8f2"/><rect x="1064.5" y="1046.5" width="4" height="4.300" fill="#e6eaee"/><rect x="1064.5" y="1052.0" width="4" height="4.300" fill="#e6eaee"/><rect x="1064.5" y="1057.5" width="4" height="4.300" fill="#e6eaee"/><rect x="1069.7" y="1046.5" width="4" height="4.300" fill="#e6eaee"/><rect x="1069.7" y="1052.0" width="4" height="4.300" fill="#e6eaee"/><rect x="1069.7" y="1057.5" width="4" height="4.300" fill="#e6eaee"/><rect x="1074.9" y="1046.5" width="4" height="4.300" fill="#e6eaee"/><rect x="1074.9" y="1052.0" width="4" height="4.300" fill="#1d4e7a"/><rect x="1074.9" y="1057.5" width="4" height="4.300" fill="#1d4e7a"/><rect x="1126" y="1038" width="16" height="24" fill="#e8ecf6" stroke="#3955a3" stroke-width="1"/><path d="M1114 1037.500l17-3v31l-17-3z" fill="#3955a3"/><text x="1122.500" y="1056" font-size="16" font-weight="bold" fill="#fff" text-anchor="middle">V</text><path d="M1133 1044l3-3l3 3l-3 3zM1136 1047v5M1133 1052h6v5h-6z" fill="none" stroke="#3955a3" stroke-width="1.300"/><circle cx="1182" cy="1050" r="15" fill="#fbc116"/><path d="M1182 1050L1169 1042.5A15 15 0 0 1 1195 1042.5z" fill="#e33b2e"/><path d="M1182 1050L1182 1065A15 15 0 0 1 1169 1042.5z" fill="#2da94f"/><path d="M1182 1050L1195 1042.5A15 15 0 0 1 1182 1065z" fill="#fbc116"/><circle cx="1182" cy="1050" r="6.800" fill="#fff"/><circle cx="1182" cy="1050" r="5.300" fill="#4a8af4"/><circle cx="1237" cy="1050" r="14.500" fill="#1b7fd0"/><path d="M1223 1046c3-12 24-14 28 0c1 6-3 8-8 8c-3 0-4-2-3-4c1-3-2-6-6-6c-5 0-9 4-11 2z" fill="#3ccf6a"/><path d="M1224 1056c5 9 18 11 25 2c-6 3-13 1-15-5c-1-3 0-6 2-7c-6-1-13 3-12 10z" fill="#0e5cb0"/><rect x="1290" y="1038" width="17" height="24" fill="#e8f2ea" stroke="#1e7145" stroke-width="1"/><path d="M1278 1037.500l17-3v31l-17-3z" fill="#1e7145"/><text x="1286.500" y="1056" font-size="16" font-weight="bold" fill="#fff" text-anchor="middle">X</text><path d="M1297 1042h8M1297 1046h8M1297 1050h8M1297 1054h8M1297 1058h8M1301 1040v20" stroke="#1e7145" stroke-width="1.200"/><rect x="1345" y="1038" width="16" height="24" fill="#eef2fa" stroke="#2b579a" stroke-width="1"/><path d="M1333 1037.500l17-3v31l-17-3z" fill="#2b579a"/><text x="1341.500" y="1056" font-size="15" font-weight="bold" fill="#fff" text-anchor="middle">W</text><path d="M1352 1042h7M1352 1046h7M1352 1050h7M1352 1054h7M1352 1058h7" stroke="#2b579a" stroke-width="1.300"/><rect x="1344.500" y="1070.500" width="7" height="3" rx="1.500" fill="#9a9a9a"/><rect x="1388" y="1035" width="30" height="30" rx="2.500" fill="url(#gMS)"/><path d="M1395.2 1063l.900-11.500h3l-.600 11.500z" fill="#f9a21c"/><path d="M1400 1063l1.500-19h3.300l-1.200 19z" fill="#f68a1e"/><path d="M1405.2 1063l2-26h3.200l-1.700 26z" fill="#f4701e"/><rect x="1443" y="1040" width="30" height="20.500" rx="5.500" fill="#ff0000"/><path d="M1454.500 1045.500v9.500l8.500-4.750z" fill="#fff"/><rect x="1488" y="1026" width="50" height="50" rx="5" fill="#35333b"/><rect x="1497.5" y="1035" width="30" height="30" rx="2.500" fill="url(#gMS)"/><path d="M1504.7 1063l.900-11.500h3l-.600 11.500z" fill="#f9a21c"/><path d="M1509.5 1063l1.500-19h3.300l-1.200 19z" fill="#f68a1e"/><path d="M1514.7 1063l2-26h3.200l-1.700 26z" fill="#f4701e"/><rect x="1503" y="1070" width="19.500" height="3.500" rx="1.700" fill="#4cc2f1"/><path d="M1651.500 1052.500l6-6l6 6" stroke="#fff" stroke-width="1.900" fill="none"/><path d="M1688.500 1048a13 13 0 0 1 18.500 0M1691.500 1051.500a8.500 8.500 0 0 1 12.500 0M1694.500 1055a4.200 4.200 0 0 1 6.500 0" stroke="#fff" stroke-width="1.600" fill="none"/><circle cx="1697.700" cy="1057.300" r="1.400" fill="#fff"/><path d="M1719 1047.500h3.500l4.500-4v13.500l-4.500-4h-3.500z" fill="none" stroke="#fff" stroke-width="1.500" stroke-linejoin="round"/><path d="M1730 1046.500c2 2 2 5.500 0 7.500M1733 1044c3.500 3.500 3.500 9 0 12.500" stroke="#fff" stroke-width="1.400" fill="none"/><rect x="1749.500" y="1044.500" width="15.500" height="10" rx="2" fill="none" stroke="#fff" stroke-width="1.500"/><rect x="1766" y="1047.500" width="2" height="4" fill="#fff"/><rect x="1751.500" y="1046.500" width="6" height="6" fill="#fff"/><path d="M1751 1040.500l-2.500 5h3l-1.500 4" stroke="#fff" stroke-width="1.400" fill="none"/><text x="1866" y="1045" font-size="15" fill="#fff" text-anchor="end" textLength="36" lengthAdjust="spacingAndGlyphs">17:22</text><text x="1866" y="1065" font-size="15" fill="#fff" text-anchor="end" textLength="77" lengthAdjust="spacingAndGlyphs">29/03/2024</text><path d="M1878.500 1056c1.500-1.500 2-3 2-6.500c0-9 11-9 11 0c0 3.500.5 5 2 6.500zM1883.500 1057.500a2.500 2.500 0 0 0 5 0z" fill="#84dcf6"/><line x1="38" x2="1850" y1="160.5" y2="160.5" stroke="#1c1cff" stroke-width="1.2" stroke-dasharray="4 3.6"/>
<line x1="38" x2="1850" y1="179.2" y2="179.2" stroke="#1c1cff" stroke-width="1.2" stroke-dasharray="4 3.6"/>
<line x1="38" x2="1850" y1="197" y2="197" stroke="#1c1cff" stroke-width="1.6" stroke-dasharray="4 3.6"/>
<path d="M37.7 178.8V205.4L39.8 207.6L41.9 205.4V178.8zM42.9 178.8V205.4L45 207.6L47.1 205.4V178.8zM48.1 178.8V205.4L50.2 207.6L52.3 205.4V178.8zM53.3 178.8V205.4L55.4 207.6L57.5 205.4V178.8zM58.6 178.8V205.4L60.7 207.6L62.8 205.4V178.8zM63.8 178.8V205.4L65.9 207.6L68 205.4V178.8zM69 178.8V205.4L71.1 207.6L73.2 205.4V178.8zM79.4 178.8V187.4L81.5 189.6L83.6 187.4V178.8zM84.6 178.8V187.4L86.7 189.6L88.8 187.4V178.8zM89.8 178.8V187.4L91.9 189.6L94 187.4V178.8zM95.1 178.8V187.4L97.2 189.6L99.3 187.4V178.8zM100.3 178.8V187.4L102.4 189.6L104.5 187.4V178.8zM105.5 178.8V187.4L107.6 189.6L109.7 187.4V178.8zM110.7 178.8V187.4L112.8 189.6L114.9 187.4V178.8zM115.9 178.8V187.4L118 189.6L120.1 187.4V178.8zM121.1 178.8V187.4L123.2 189.6L125.3 187.4V178.8zM126.3 178.8V187.4L128.4 189.6L130.5 187.4V178.8zM131.6 178.8V187.4L133.7 189.6L135.8 187.4V178.8z" fill="#ff0000"/>
<path d="M136.9 178.8V152.7L138.9 150.5L140.8 152.7V178.8zM142.1 178.8V152.7L144.1 150.5L146 152.7V178.8zM147.3 178.8V152.7L149.3 150.5L151.2 152.7V178.8zM152.6 178.8V152.7L154.5 150.5L156.5 152.7V178.8zM157.8 178.8V152.7L159.7 150.5L161.7 152.7V178.8zM163 178.8V152.7L164.9 150.5L166.9 152.7V178.8zM168.2 178.8V152.7L170.1 150.5L172.1 152.7V178.8zM173.4 178.8V152.7L175.4 150.5L177.3 152.7V178.8zM178.6 178.8V152.7L180.6 150.5L182.5 152.7V178.8zM194.3 178.8V170.5L196.2 168.3L198.2 170.5V178.8zM199.5 178.8V161.5L201.4 159.3L203.4 161.5V178.8zM204.7 178.8V161.5L206.6 159.3L208.6 161.5V178.8zM209.9 178.8V161.5L211.9 159.3L213.8 161.5V178.8zM215.1 178.8V161.5L217.1 159.3L219 161.5V178.8zM220.3 178.8V161.5L222.3 159.3L224.2 161.5V178.8zM225.6 178.8V161.5L227.5 159.3L229.5 161.5V178.8zM230.8 178.8V161.5L232.7 159.3L234.7 161.5V178.8zM236 178.8V161.5L237.9 159.3L239.9 161.5V178.8zM241.2 178.8V161.5L243.1 159.3L245.1 161.5V178.8zM246.4 178.8V161.5L248.4 159.3L250.3 161.5V178.8zM251.6 178.8V161.5L253.6 159.3L255.5 161.5V178.8zM256.8 178.8V161.5L258.8 159.3L260.7 161.5V178.8zM262.1 178.8V161.5L264 159.3L266 161.5V178.8zM267.3 178.8V161.5L269.2 159.3L271.2 161.5V178.8zM272.5 178.8V161.5L274.4 159.3L276.4 161.5V178.8zM277.7 178.8V161.5L279.6 159.3L281.6 161.5V178.8zM282.9 178.8V170.5L284.9 168.3L286.8 170.5V178.8zM288.1 178.8V170.5L290.1 168.3L292 170.5V178.8zM293.3 178.8V170.5L295.3 168.3L297.2 170.5V178.8zM298.5 178.8V170.5L300.5 168.3L302.4 170.5V178.8zM303.8 178.8V170.5L305.7 168.3L307.7 170.5V178.8zM309 178.8V170.5L310.9 168.3L312.9 170.5V178.8zM314.2 178.8V170.5L316.1 168.3L318.1 170.5V178.8zM319.4 178.8V170.5L321.4 168.3L323.3 170.5V178.8zM324.6 178.8V170.5L326.6 168.3L328.5 170.5V178.8zM329.8 178.8V170.5L331.8 168.3L333.7 170.5V178.8zM335 178.8V170.5L337 168.3L338.9 170.5V178.8zM340.3 178.8V170.5L342.2 168.3L344.2 170.5V178.8zM345.5 178.8V170.5L347.4 168.3L349.4 170.5V178.8zM350.7 178.8V170.5L352.6 168.3L354.6 170.5V178.8zM355.9 178.8V170.5L357.9 168.3L359.8 170.5V178.8zM361.1 178.8V170.5L363.1 168.3L365 170.5V178.8zM366.3 178.8V170.5L368.3 168.3L370.2 170.5V178.8zM371.5 178.8V170.5L373.5 168.3L375.4 170.5V178.8zM376.8 178.8V170.5L378.7 168.3L380.7 170.5V178.8zM382 178.8V170.5L383.9 168.3L385.9 170.5V178.8zM387.2 178.8V170.5L389.1 168.3L391.1 170.5V178.8zM392.4 178.8V152.7L394.4 150.5L396.3 152.7V178.8zM397.6 178.8V152.7L399.6 150.5L401.5 152.7V178.8zM402.8 178.8V152.7L404.8 150.5L406.7 152.7V178.8zM408 178.8V152.7L410 150.5L411.9 152.7V178.8zM413.3 178.8V152.7L415.2 150.5L417.2 152.7V178.8zM418.5 178.8V152.7L420.4 150.5L422.4 152.7V178.8zM423.7 178.8V152.7L425.6 150.5L427.6 152.7V178.8zM428.9 178.8V152.7L430.8 150.5L432.8 152.7V178.8zM434.1 178.8V152.7L436.1 150.5L438 152.7V178.8zM439.3 178.8V152.7L441.3 150.5L443.2 152.7V178.8zM444.5 178.8V152.7L446.5 150.5L448.4 152.7V178.8zM449.8 178.8V152.7L451.7 150.5L453.7 152.7V178.8zM455 178.8V152.7L456.9 150.5L458.9 152.7V178.8zM460.2 178.8V152.7L462.1 150.5L464.1 152.7V178.8zM465.4 178.8V152.7L467.3 150.5L469.3 152.7V178.8zM470.6 178.8V152.7L472.6 150.5L474.5 152.7V178.8zM475.8 178.8V152.7L477.8 150.5L479.7 152.7V178.8zM481 178.8V152.7L483 150.5L484.9 152.7V178.8zM486.3 178.8V152.7L488.2 150.5L490.2 152.7V178.8zM491.5 178.8V152.7L493.4 150.5L495.4 152.7V178.8zM496.7 178.8V152.7L498.6 150.5L500.6 152.7V178.8zM501.9 178.8V152.7L503.8 150.5L505.8 152.7V178.8zM507.1 178.8V152.7L509.1 150.5L511 152.7V178.8zM564.5 178.8V170.5L566.4 168.3L568.4 170.5V178.8zM569.7 178.8V161.5L571.6 159.3L573.6 161.5V178.8zM574.9 178.8V161.5L576.8 159.3L578.8 161.5V178.8zM580.1 178.8V161.5L582.1 159.3L584 161.5V178.8zM585.3 178.8V161.5L587.3 159.3L589.2 161.5V178.8zM590.5 178.8V170.5L592.5 168.3L594.4 170.5V178.8zM595.7 178.8V170.5L597.7 168.3L599.6 170.5V178.8zM601 178.8V170.5L602.9 168.3L604.9 170.5V178.8zM606.2 178.8V170.5L608.1 168.3L610.1 170.5V178.8zM611.4 178.8V170.5L613.3 168.3L615.3 170.5V178.8zM616.6 178.8V170.5L618.6 168.3L620.5 170.5V178.8zM621.8 178.8V170.5L623.8 168.3L625.7 170.5V178.8zM627 178.8V170.5L629 168.3L630.9 170.5V178.8zM632.2 178.8V170.5L634.2 168.3L636.1 170.5V178.8zM637.5 178.8V170.5L639.4 168.3L641.4 170.5V178.8zM642.7 178.8V170.5L644.6 168.3L646.6 170.5V178.8zM647.9 178.8V152.7L649.8 150.5L651.8 152.7V178.8zM653.1 178.8V161.5L655.1 159.3L657 161.5V178.8zM658.3 178.8V161.5L660.3 159.3L662.2 161.5V178.8zM663.5 178.8V161.5L665.5 159.3L667.4 161.5V178.8zM668.7 178.8V161.5L670.7 159.3L672.6 161.5V178.8zM674 178.8V142.9L675.9 140.7L677.9 142.9V178.8zM679.2 178.8V142.9L681.1 140.7L683.1 142.9V178.8zM684.4 178.8V142.9L686.3 140.7L688.3 142.9V178.8zM689.6 178.8V142.9L691.6 140.7L693.5 142.9V178.8zM694.8 178.8V142.9L696.8 140.7L698.7 142.9V178.8zM700 178.8V142.9L702 140.7L703.9 142.9V178.8zM705.2 178.8V142.9L707.2 140.7L709.1 142.9V178.8zM710.5 178.8V142.9L712.4 140.7L714.4 142.9V178.8zM715.7 178.8V142.9L717.6 140.7L719.6 142.9V178.8zM720.9 178.8V152.7L722.8 150.5L724.8 152.7V178.8zM726.1 178.8V161.5L728 159.3L730 161.5V178.8zM731.3 178.8V161.5L733.3 159.3L735.2 161.5V178.8zM736.5 178.8V161.5L738.5 159.3L740.4 161.5V178.8zM741.7 178.8V161.5L743.7 159.3L745.6 161.5V178.8zM747 178.8V161.5L748.9 159.3L750.9 161.5V178.8zM752.2 178.8V161.5L754.1 159.3L756.1 161.5V178.8zM757.4 178.8V161.5L759.3 159.3L761.3 161.5V178.8zM762.6 178.8V161.5L764.5 159.3L766.5 161.5V178.8zM767.8 178.8V161.5L769.8 159.3L771.7 161.5V178.8zM773 178.8V161.5L775 159.3L776.9 161.5V178.8zM778.2 178.8V161.5L780.2 159.3L782.1 161.5V178.8zM783.5 178.8V161.5L785.4 159.3L787.4 161.5V178.8zM788.7 178.8V161.5L790.6 159.3L792.6 161.5V178.8zM793.9 178.8V161.5L795.8 159.3L797.8 161.5V178.8zM799.1 178.8V161.5L801 159.3L803 161.5V178.8zM804.3 178.8V161.5L806.3 159.3L808.2 161.5V178.8zM809.5 178.8V161.5L811.5 159.3L813.4 161.5V178.8zM814.7 178.8V161.5L816.7 159.3L818.6 161.5V178.8zM820 178.8V161.5L821.9 159.3L823.9 161.5V178.8zM825.2 178.8V161.5L827.1 159.3L829.1 161.5V178.8zM830.4 178.8V161.5L832.3 159.3L834.3 161.5V178.8zM835.6 178.8V161.5L837.5 159.3L839.5 161.5V178.8zM840.8 178.8V161.5L842.8 159.3L844.7 161.5V178.8zM846 178.8V161.5L848 159.3L849.9 161.5V178.8zM851.2 178.8V161.5L853.2 159.3L855.1 161.5V178.8zM856.4 178.8V161.5L858.4 159.3L860.3 161.5V178.8zM861.7 178.8V161.5L863.6 159.3L865.6 161.5V178.8zM866.9 178.8V161.5L868.8 159.3L870.8 161.5V178.8zM872.1 178.8V161.5L874 159.3L876 161.5V178.8zM877.3 178.8V161.5L879.3 159.3L881.2 161.5V178.8zM882.5 178.8V161.5L884.5 159.3L886.4 161.5V178.8zM887.7 178.8V161.5L889.7 159.3L891.6 161.5V178.8zM892.9 178.8V161.5L894.9 159.3L896.8 161.5V178.8zM898.2 178.8V161.5L900.1 159.3L902.1 161.5V178.8zM903.4 178.8V161.5L905.3 159.3L907.3 161.5V178.8zM908.6 178.8V161.5L910.5 159.3L912.5 161.5V178.8zM913.8 178.8V161.5L915.8 159.3L917.7 161.5V178.8zM919 178.8V161.5L921 159.3L922.9 161.5V178.8zM924.2 178.8V152.7L926.2 150.5L928.1 152.7V178.8zM929.4 178.8V152.7L931.4 150.5L933.3 152.7V178.8zM934.7 178.8V152.7L936.6 150.5L938.6 152.7V178.8zM939.9 178.8V152.7L941.8 150.5L943.8 152.7V178.8zM945.1 178.8V152.7L947 150.5L949 152.7V178.8zM950.3 178.8V152.7L952.3 150.5L954.2 152.7V178.8zM955.5 178.8V152.7L957.5 150.5L959.4 152.7V178.8zM960.7 178.8V152.7L962.7 150.5L964.6 152.7V178.8zM965.9 178.8V152.7L967.9 150.5L969.8 152.7V178.8zM971.2 178.8V152.7L973.1 150.5L975.1 152.7V178.8zM976.4 178.8V152.7L978.3 150.5L980.3 152.7V178.8zM981.6 178.8V152.7L983.5 150.5L985.5 152.7V178.8zM986.8 178.8V152.7L988.7 150.5L990.7 152.7V178.8zM992 178.8V152.7L994 150.5L995.9 152.7V178.8zM997.2 178.8V152.7L999.2 150.5L1001.1 152.7V178.8zM1002.4 178.8V152.7L1004.4 150.5L1006.3 152.7V178.8zM1007.7 178.8V152.7L1009.6 150.5L1011.6 152.7V178.8zM1012.9 178.8V152.7L1014.8 150.5L1016.8 152.7V178.8zM1018.1 178.8V152.7L1020 150.5L1022 152.7V178.8zM1023.3 178.8V152.7L1025.2 150.5L1027.2 152.7V178.8zM1028.5 178.8V152.7L1030.5 150.5L1032.4 152.7V178.8zM1033.7 178.8V152.7L1035.7 150.5L1037.6 152.7V178.8zM1038.9 178.8V152.7L1040.9 150.5L1042.8 152.7V178.8zM1044.2 178.8V152.7L1046.1 150.5L1048.1 152.7V178.8zM1070.2 178.8V170.5L1072.2 168.3L1074.1 170.5V178.8zM1075.4 178.8V161.5L1077.4 159.3L1079.3 161.5V178.8zM1080.7 178.8V161.5L1082.6 159.3L1084.6 161.5V178.8zM1085.9 178.8V161.5L1087.8 159.3L1089.8 161.5V178.8zM1091.1 178.8V170.5L1093 168.3L1095 170.5V178.8zM1096.3 178.8V170.5L1098.2 168.3L1100.2 170.5V178.8zM1101.5 178.8V170.5L1103.5 168.3L1105.4 170.5V178.8zM1106.7 178.8V170.5L1108.7 168.3L1110.6 170.5V178.8zM1111.9 178.8V170.5L1113.9 168.3L1115.8 170.5V178.8zM1117.1 178.8V170.5L1119.1 168.3L1121 170.5V178.8zM1122.4 178.8V170.5L1124.3 168.3L1126.3 170.5V178.8zM1127.6 178.8V170.5L1129.5 168.3L1131.5 170.5V178.8zM1132.8 178.8V170.5L1134.7 168.3L1136.7 170.5V178.8zM1138 178.8V170.5L1140 168.3L1141.9 170.5V178.8zM1143.2 178.8V170.5L1145.2 168.3L1147.1 170.5V178.8zM1148.4 178.8V142.9L1150.4 140.7L1152.3 142.9V178.8zM1153.6 178.8V142.9L1155.6 140.7L1157.5 142.9V178.8zM1158.9 178.8V142.9L1160.8 140.7L1162.8 142.9V178.8zM1164.1 178.8V142.9L1166 140.7L1168 142.9V178.8zM1169.3 178.8V142.9L1171.2 140.7L1173.2 142.9V178.8zM1174.5 178.8V142.9L1176.5 140.7L1178.4 142.9V178.8zM1179.7 178.8V142.9L1181.7 140.7L1183.6 142.9V178.8zM1184.9 178.8V142.9L1186.9 140.7L1188.8 142.9V178.8zM1190.1 178.8V152.7L1192.1 150.5L1194 152.7V178.8zM1195.4 178.8V152.7L1197.3 150.5L1199.3 152.7V178.8zM1200.6 178.8V152.7L1202.5 150.5L1204.5 152.7V178.8zM1205.8 178.8V152.7L1207.7 150.5L1209.7 152.7V178.8zM1211 178.8V142.9L1213 140.7L1214.9 142.9V178.8zM1216.2 178.8V142.9L1218.2 140.7L1220.1 142.9V178.8zM1221.4 178.8V142.9L1223.4 140.7L1225.3 142.9V178.8zM1226.6 178.8V142.9L1228.6 140.7L1230.5 142.9V178.8zM1231.9 178.8V142.9L1233.8 140.7L1235.8 142.9V178.8zM1237.1 178.8V142.9L1239 140.7L1241 142.9V178.8zM1242.3 178.8V142.9L1244.2 140.7L1246.2 142.9V178.8zM1247.5 178.8V152.7L1249.4 150.5L1251.4 152.7V178.8zM1252.7 178.8V152.7L1254.7 150.5L1256.6 152.7V178.8zM1257.9 178.8V152.7L1259.9 150.5L1261.8 152.7V178.8zM1263.1 178.8V152.7L1265.1 150.5L1267 152.7V178.8zM1268.4 178.8V152.7L1270.3 150.5L1272.3 152.7V178.8zM1273.6 178.8V152.7L1275.5 150.5L1277.5 152.7V178.8zM1278.8 178.8V152.7L1280.7 150.5L1282.7 152.7V178.8zM1284 178.8V152.7L1285.9 150.5L1287.9 152.7V178.8zM1289.2 178.8V152.7L1291.2 150.5L1293.1 152.7V178.8zM1294.4 178.8V152.7L1296.4 150.5L1298.3 152.7V178.8zM1299.6 178.8V152.7L1301.6 150.5L1303.5 152.7V178.8zM1304.9 178.8V152.7L1306.8 150.5L1308.8 152.7V178.8zM1310.1 178.8V152.7L1312 150.5L1314 152.7V178.8zM1315.3 178.8V152.7L1317.2 150.5L1319.2 152.7V178.8zM1320.5 178.8V152.7L1322.4 150.5L1324.4 152.7V178.8zM1325.7 178.8V152.7L1327.7 150.5L1329.6 152.7V178.8zM1330.9 178.8V152.7L1332.9 150.5L1334.8 152.7V178.8zM1336.1 178.8V152.7L1338.1 150.5L1340 152.7V178.8zM1341.4 178.8V152.7L1343.3 150.5L1345.3 152.7V178.8zM1346.6 178.8V152.7L1348.5 150.5L1350.5 152.7V178.8zM1351.8 178.8V152.7L1353.7 150.5L1355.7 152.7V178.8zM1357 178.8V152.7L1358.9 150.5L1360.9 152.7V178.8zM1362.2 178.8V152.7L1364.2 150.5L1366.1 152.7V178.8zM1367.4 178.8V152.7L1369.4 150.5L1371.3 152.7V178.8zM1372.6 178.8V152.7L1374.6 150.5L1376.5 152.7V178.8zM1377.8 178.8V152.7L1379.8 150.5L1381.7 152.7V178.8zM1383.1 178.8V152.7L1385 150.5L1387 152.7V178.8zM1388.3 178.8V152.7L1390.2 150.5L1392.2 152.7V178.8zM1393.5 178.8V170.5L1395.4 168.3L1397.4 170.5V178.8zM1398.7 178.8V170.5L1400.7 168.3L1402.6 170.5V178.8zM1403.9 178.8V170.5L1405.9 168.3L1407.8 170.5V178.8zM1409.1 178.8V170.5L1411.1 168.3L1413 170.5V178.8zM1414.3 178.8V170.5L1416.3 168.3L1418.2 170.5V178.8zM1419.6 178.8V170.5L1421.5 168.3L1423.5 170.5V178.8zM1424.8 178.8V170.5L1426.7 168.3L1428.7 170.5V178.8zM1430 178.8V170.5L1431.9 168.3L1433.9 170.5V178.8zM1435.2 178.8V170.5L1437.2 168.3L1439.1 170.5V178.8zM1440.4 178.8V152.7L1442.4 150.5L1444.3 152.7V178.8zM1445.6 178.8V152.7L1447.6 150.5L1449.5 152.7V178.8zM1450.8 178.8V152.7L1452.8 150.5L1454.7 152.7V178.8zM1456.1 178.8V152.7L1458 150.5L1460 152.7V178.8zM1461.3 178.8V152.7L1463.2 150.5L1465.2 152.7V178.8zM1466.5 178.8V152.7L1468.4 150.5L1470.4 152.7V178.8zM1471.7 178.8V152.7L1473.7 150.5L1475.6 152.7V178.8zM1476.9 178.8V152.7L1478.9 150.5L1480.8 152.7V178.8zM1482.1 178.8V152.7L1484.1 150.5L1486 152.7V178.8zM1487.3 178.8V152.7L1489.3 150.5L1491.2 152.7V178.8zM1492.6 178.8V161.5L1494.5 159.3L1496.5 161.5V178.8zM1497.8 178.8V161.5L1499.7 159.3L1501.7 161.5V178.8zM1503 178.8V161.5L1504.9 159.3L1506.9 161.5V178.8zM1508.2 178.8V161.5L1510.1 159.3L1512.1 161.5V178.8zM1513.4 178.8V161.5L1515.4 159.3L1517.3 161.5V178.8zM1518.6 178.8V152.7L1520.6 150.5L1522.5 152.7V178.8zM1523.8 178.8V152.7L1525.8 150.5L1527.7 152.7V178.8zM1529.1 178.8V152.7L1531 150.5L1533 152.7V178.8zM1534.3 178.8V152.7L1536.2 150.5L1538.2 152.7V178.8zM1539.5 178.8V152.7L1541.4 150.5L1543.4 152.7V178.8zM1544.7 178.8V152.7L1546.6 150.5L1548.6 152.7V178.8zM1549.9 178.8V152.7L1551.9 150.5L1553.8 152.7V178.8zM1555.1 178.8V152.7L1557.1 150.5L1559 152.7V178.8zM1560.3 178.8V152.7L1562.3 150.5L1564.2 152.7V178.8zM1565.6 178.8V161.5L1567.5 159.3L1569.5 161.5V178.8zM1570.8 178.8V161.5L1572.7 159.3L1574.7 161.5V178.8zM1576 178.8V161.5L1577.9 159.3L1579.9 161.5V178.8zM1581.2 178.8V161.5L1583.1 159.3L1585.1 161.5V178.8zM1586.4 178.8V161.5L1588.4 159.3L1590.3 161.5V178.8zM1591.6 178.8V161.5L1593.6 159.3L1595.5 161.5V178.8zM1596.8 178.8V161.5L1598.8 159.3L1600.7 161.5V178.8zM1602 178.8V170.5L1604 168.3L1605.9 170.5V178.8zM1607.3 178.8V170.5L1609.2 168.3L1611.2 170.5V178.8zM1612.5 178.8V152.7L1614.4 150.5L1616.4 152.7V178.8zM1617.7 178.8V152.7L1619.6 150.5L1621.6 152.7V178.8zM1622.9 178.8V152.7L1624.9 150.5L1626.8 152.7V178.8zM1628.1 178.8V152.7L1630.1 150.5L1632 152.7V178.8zM1633.3 178.8V152.7L1635.3 150.5L1637.2 152.7V178.8zM1638.5 178.8V152.7L1640.5 150.5L1642.4 152.7V178.8zM1643.8 178.8V152.7L1645.7 150.5L1647.7 152.7V178.8zM1649 178.8V152.7L1650.9 150.5L1652.9 152.7V178.8zM1654.2 178.8V152.7L1656.1 150.5L1658.1 152.7V178.8zM1659.4 178.8V152.7L1661.4 150.5L1663.3 152.7V178.8zM1664.6 178.8V152.7L1666.6 150.5L1668.5 152.7V178.8zM1669.8 178.8V152.7L1671.8 150.5L1673.7 152.7V178.8zM1675 178.8V152.7L1677 150.5L1678.9 152.7V178.8zM1680.3 178.8V152.7L1682.2 150.5L1684.2 152.7V178.8zM1685.5 178.8V152.7L1687.4 150.5L1689.4 152.7V178.8zM1690.7 178.8V161.5L1692.6 159.3L1694.6 161.5V178.8zM1695.9 178.8V161.5L1697.9 159.3L1699.8 161.5V178.8zM1701.1 178.8V161.5L1703.1 159.3L1705 161.5V178.8zM1706.3 178.8V161.5L1708.3 159.3L1710.2 161.5V178.8zM1711.5 178.8V161.5L1713.5 159.3L1715.4 161.5V178.8zM1716.8 178.8V161.5L1718.7 159.3L1720.7 161.5V178.8zM1722 178.8V161.5L1723.9 159.3L1725.9 161.5V178.8zM1727.2 178.8V161.5L1729.1 159.3L1731.1 161.5V178.8zM1732.4 178.8V161.5L1734.3 159.3L1736.3 161.5V178.8zM1737.6 178.8V142.9L1739.6 140.7L1741.5 142.9V178.8zM1742.8 178.8V142.9L1744.8 140.7L1746.7 142.9V178.8zM1748 178.8V142.9L1750 140.7L1751.9 142.9V178.8zM1753.3 178.8V142.9L1755.2 140.7L1757.2 142.9V178.8zM1758.5 178.8V142.9L1760.4 140.7L1762.4 142.9V178.8zM1763.7 178.8V142.9L1765.6 140.7L1767.6 142.9V178.8z" fill="#075307"/>
<path d="M184.2 179.10000000000002h3.2M185.8 177.60000000000002v3M189.4 179.10000000000002h3.2M191 177.60000000000002v3M283.3 179.10000000000002h3.2M284.9 177.60000000000002v3M288.5 179.10000000000002h3.2M290.1 177.60000000000002v3M293.7 179.10000000000002h3.2M295.3 177.60000000000002v3M298.9 179.10000000000002h3.2M300.5 177.60000000000002v3M304.1 179.10000000000002h3.2M305.7 177.60000000000002v3M309.3 179.10000000000002h3.2M310.9 177.60000000000002v3M314.5 179.10000000000002h3.2M316.1 177.60000000000002v3M319.8 179.10000000000002h3.2M321.4 177.60000000000002v3M325 179.10000000000002h3.2M326.6 177.60000000000002v3M330.2 179.10000000000002h3.2M331.8 177.60000000000002v3M335.4 179.10000000000002h3.2M337 177.60000000000002v3M340.6 179.10000000000002h3.2M342.2 177.60000000000002v3M345.8 179.10000000000002h3.2M347.4 177.60000000000002v3M351 179.10000000000002h3.2M352.6 177.60000000000002v3M356.3 179.10000000000002h3.2M357.9 177.60000000000002v3M361.5 179.10000000000002h3.2M363.1 177.60000000000002v3M366.7 179.10000000000002h3.2M368.3 177.60000000000002v3M371.9 179.10000000000002h3.2M373.5 177.60000000000002v3M377.1 179.10000000000002h3.2M378.7 177.60000000000002v3M382.3 179.10000000000002h3.2M383.9 177.60000000000002v3M387.5 179.10000000000002h3.2M389.1 177.60000000000002v3M512.7 179.10000000000002h3.2M514.3 177.60000000000002v3M517.9 179.10000000000002h3.2M519.5 177.60000000000002v3M523.1 179.10000000000002h3.2M524.7 177.60000000000002v3M528.3 179.10000000000002h3.2M529.9 177.60000000000002v3M533.5 179.10000000000002h3.2M535.1 177.60000000000002v3M538.7 179.10000000000002h3.2M540.3 177.60000000000002v3M544 179.10000000000002h3.2M545.6 177.60000000000002v3M549.2 179.10000000000002h3.2M550.8 177.60000000000002v3M554.4 179.10000000000002h3.2M556 177.60000000000002v3M559.6 179.10000000000002h3.2M561.2 177.60000000000002v3M596.1 179.10000000000002h3.2M597.7 177.60000000000002v3M601.3 179.10000000000002h3.2M602.9 177.60000000000002v3M606.5 179.10000000000002h3.2M608.1 177.60000000000002v3M611.7 179.10000000000002h3.2M613.3 177.60000000000002v3M617 179.10000000000002h3.2M618.6 177.60000000000002v3M622.2 179.10000000000002h3.2M623.8 177.60000000000002v3M627.4 179.10000000000002h3.2M629 177.60000000000002v3M632.6 179.10000000000002h3.2M634.2 177.60000000000002v3M637.8 179.10000000000002h3.2M639.4 177.60000000000002v3M643 179.10000000000002h3.2M644.6 177.60000000000002v3M674.3 179.10000000000002h3.2M675.9 177.60000000000002v3M679.5 179.10000000000002h3.2M681.1 177.60000000000002v3M684.7 179.10000000000002h3.2M686.3 177.60000000000002v3M690 179.10000000000002h3.2M691.6 177.60000000000002v3M695.2 179.10000000000002h3.2M696.8 177.60000000000002v3M700.4 179.10000000000002h3.2M702 177.60000000000002v3M705.6 179.10000000000002h3.2M707.2 177.60000000000002v3M710.8 179.10000000000002h3.2M712.4 177.60000000000002v3M716 179.10000000000002h3.2M717.6 177.60000000000002v3M1049.7 179.10000000000002h3.2M1051.3 177.60000000000002v3M1054.9 179.10000000000002h3.2M1056.5 177.60000000000002v3M1060.1 179.10000000000002h3.2M1061.7 177.60000000000002v3M1065.4 179.10000000000002h3.2M1067 177.60000000000002v3M1091.4 179.10000000000002h3.2M1093 177.60000000000002v3M1096.6 179.10000000000002h3.2M1098.2 177.60000000000002v3M1101.9 179.10000000000002h3.2M1103.5 177.60000000000002v3M1107.1 179.10000000000002h3.2M1108.7 177.60000000000002v3M1112.3 179.10000000000002h3.2M1113.9 177.60000000000002v3M1117.5 179.10000000000002h3.2M1119.1 177.60000000000002v3M1122.7 179.10000000000002h3.2M1124.3 177.60000000000002v3M1127.9 179.10000000000002h3.2M1129.5 177.60000000000002v3M1133.1 179.10000000000002h3.2M1134.7 177.60000000000002v3M1138.4 179.10000000000002h3.2M1140 177.60000000000002v3M1148.8 179.10000000000002h3.2M1150.4 177.60000000000002v3M1154 179.10000000000002h3.2M1155.6 177.60000000000002v3M1159.2 179.10000000000002h3.2M1160.8 177.60000000000002v3M1164.4 179.10000000000002h3.2M1166 177.60000000000002v3M1169.6 179.10000000000002h3.2M1171.2 177.60000000000002v3M1174.9 179.10000000000002h3.2M1176.5 177.60000000000002v3M1180.1 179.10000000000002h3.2M1181.7 177.60000000000002v3M1185.3 179.10000000000002h3.2M1186.9 177.60000000000002v3M1190.5 179.10000000000002h3.2M1192.1 177.60000000000002v3M1195.7 179.10000000000002h3.2M1197.3 177.60000000000002v3M1200.9 179.10000000000002h3.2M1202.5 177.60000000000002v3M1206.1 179.10000000000002h3.2M1207.7 177.60000000000002v3M1211.4 179.10000000000002h3.2M1213 177.60000000000002v3M1216.6 179.10000000000002h3.2M1218.2 177.60000000000002v3M1221.8 179.10000000000002h3.2M1223.4 177.60000000000002v3M1227 179.10000000000002h3.2M1228.6 177.60000000000002v3M1232.2 179.10000000000002h3.2M1233.8 177.60000000000002v3M1237.4 179.10000000000002h3.2M1239 177.60000000000002v3M1242.6 179.10000000000002h3.2M1244.2 177.60000000000002v3M1247.8 179.10000000000002h3.2M1249.4 177.60000000000002v3M1253.1 179.10000000000002h3.2M1254.7 177.60000000000002v3M1258.3 179.10000000000002h3.2M1259.9 177.60000000000002v3M1263.5 179.10000000000002h3.2M1265.1 177.60000000000002v3M1268.7 179.10000000000002h3.2M1270.3 177.60000000000002v3M1273.9 179.10000000000002h3.2M1275.5 177.60000000000002v3M1279.1 179.10000000000002h3.2M1280.7 177.60000000000002v3M1284.3 179.10000000000002h3.2M1285.9 177.60000000000002v3M1289.6 179.10000000000002h3.2M1291.2 177.60000000000002v3M1294.8 179.10000000000002h3.2M1296.4 177.60000000000002v3M1300 179.10000000000002h3.2M1301.6 177.60000000000002v3M1305.2 179.10000000000002h3.2M1306.8 177.60000000000002v3M1310.4 179.10000000000002h3.2M1312 177.60000000000002v3M1315.6 179.10000000000002h3.2M1317.2 177.60000000000002v3M1320.8 179.10000000000002h3.2M1322.4 177.60000000000002v3M1326.1 179.10000000000002h3.2M1327.7 177.60000000000002v3M1331.3 179.10000000000002h3.2M1332.9 177.60000000000002v3M1336.5 179.10000000000002h3.2M1338.1 177.60000000000002v3M1341.7 179.10000000000002h3.2M1343.3 177.60000000000002v3M1346.9 179.10000000000002h3.2M1348.5 177.60000000000002v3M1352.1 179.10000000000002h3.2M1353.7 177.60000000000002v3M1357.3 179.10000000000002h3.2M1358.9 177.60000000000002v3M1362.6 179.10000000000002h3.2M1364.2 177.60000000000002v3M1367.8 179.10000000000002h3.2M1369.4 177.60000000000002v3M1373 179.10000000000002h3.2M1374.6 177.60000000000002v3M1378.2 179.10000000000002h3.2M1379.8 177.60000000000002v3M1383.4 179.10000000000002h3.2M1385 177.60000000000002v3M1388.6 179.10000000000002h3.2M1390.2 177.60000000000002v3M1393.8 179.10000000000002h3.2M1395.4 177.60000000000002v3M1399.1 179.10000000000002h3.2M1400.7 177.60000000000002v3M1404.3 179.10000000000002h3.2M1405.9 177.60000000000002v3M1409.5 179.10000000000002h3.2M1411.1 177.60000000000002v3M1414.7 179.10000000000002h3.2M1416.3 177.60000000000002v3M1419.9 179.10000000000002h3.2M1421.5 177.60000000000002v3M1425.1 179.10000000000002h3.2M1426.7 177.60000000000002v3M1430.3 179.10000000000002h3.2M1431.9 177.60000000000002v3M1435.6 179.10000000000002h3.2M1437.2 177.60000000000002v3M1492.9 179.10000000000002h3.2M1494.5 177.60000000000002v3M1498.1 179.10000000000002h3.2M1499.7 177.60000000000002v3M1503.3 179.10000000000002h3.2M1504.9 177.60000000000002v3M1508.5 179.10000000000002h3.2M1510.1 177.60000000000002v3M1513.8 179.10000000000002h3.2M1515.4 177.60000000000002v3M1565.9 179.10000000000002h3.2M1567.5 177.60000000000002v3M1571.1 179.10000000000002h3.2M1572.7 177.60000000000002v3M1576.3 179.10000000000002h3.2M1577.9 177.60000000000002v3M1581.5 179.10000000000002h3.2M1583.1 177.60000000000002v3M1586.8 179.10000000000002h3.2M1588.4 177.60000000000002v3M1592 179.10000000000002h3.2M1593.6 177.60000000000002v3M1597.2 179.10000000000002h3.2M1598.8 177.60000000000002v3M1602.4 179.10000000000002h3.2M1604 177.60000000000002v3M1738 179.10000000000002h3.2M1739.6 177.60000000000002v3M1743.2 179.10000000000002h3.2M1744.8 177.60000000000002v3M1748.4 179.10000000000002h3.2M1750 177.60000000000002v3M1753.6 179.10000000000002h3.2M1755.2 177.60000000000002v3M1758.8 179.10000000000002h3.2M1760.4 177.60000000000002v3M1764 179.10000000000002h3.2M1765.6 177.60000000000002v3" stroke="#ff1a1a" stroke-width="1.3" fill="none"/>
<polyline points="38,189 74,189 78,179.8 181,179.8 186,189 192,189 198,179.8 282,179.8 286,189 389,189 393,179.8 510,179.8 514,189 562,189 568,179.8 589,179.8 593,189 644,189 648,179.8 672,179.8 676,170.6 720,170.6 725,179.8 1046,179.8 1050,189 1066,189 1072,179.8 1089,179.8 1093,189 1143,189 1148,170.6 1390,170.6 1394,189 1437,189 1441,179.8 1489,179.8 1493,189 1514,189 1518,179.8 1563,179.8 1567,189 1606,189 1611,179.8 1734,179.8 1739,170.6 1766,170.6" fill="none" stroke="#0a0aff" stroke-width="3.4" stroke-linejoin="round"/>
<polyline points="38,178.5 74,178.5 78,169.3 181,169.3 186,187.7 197,187.7 201,178.5 392,178.5 396,169.3 509,169.3 514,187.7 565,187.7 569,178.5 645,178.5 649,169.3 653,178.5 672,178.5 676,169.3 720,169.3 725,178.5 921,178.5 925,169.3 1045,169.3 1050,187.7 1070,187.7 1074,178.5 1145,178.5 1149,169.3 1186,169.3 1191,178.5 1207,178.5 1211,169.3 1244,169.3 1249,178.5 1438,178.5 1442,169.3 1597,169.3 1602,178.5 1607,178.5 1612,169.3 1686,169.3 1691,178.5 1734,178.5 1739,169.3 1766,169.3" fill="none" stroke="#000" stroke-width="2" stroke-linejoin="round"/>
<rect x="37.2" y="134" width="2" height="88.5" fill="#e8202a"/>
<rect x="136.2" y="134" width="1.5" height="88.5" fill="#2f7a2f"/>
<path d="M1850.5 134V222" stroke="#0d8c82" stroke-width="1.6"/>
<path d="M1850 142h11M1850 160.5h11M1850 179.2h11M1850 197h11M1850 215.5h11M1850 151.5h5M1850 170h5M1850 188h5M1850 206h5" stroke="#0d8c82" stroke-width="1.5"/>
<text x="1907.5" y="167" text-anchor="end" font-size="13.6" fill="#128a80">1</text>
<text x="1907.5" y="185.8" text-anchor="end" font-size="13.6" fill="#128a80">0</text>
<text x="1907.5" y="203.2" text-anchor="end" font-size="13.6" fill="#128a80">-1</text><g clip-path="url(#cpMain)">
<rect x="37.2" y="256" width="2" height="624" fill="#e8202a"/>
<rect x="136.2" y="256" width="1.5" height="624" fill="#2f7a2f"/>
<path d="M42.5 823V825M40.6 824.5h1.9M42.5 824.5h1.9M47.5 823V826M45.6 824.5h1.9M47.5 825.5h1.9M53.5 824V826M51.6 825.5h1.9M53.5 826.5h1.9M58.5 824V827M56.6 826.5h1.9M58.5 826.5h1.9M63.5 825V828M61.6 826.5h1.9M63.5 826.5h1.9M68.5 825V828M66.6 826.5h1.9M68.5 826.5h1.9M73.5 824V827M71.6 826.5h1.9M73.5 824.5h1.9M84.5 824V826M82.6 824.5h1.9M84.5 826.5h1.9M89.5 825V827M87.6 826.5h1.9M89.5 826.5h1.9M94.5 825V828M92.6 826.5h1.9M94.5 827.5h1.9M99.5 826V828M97.6 827.5h1.9M99.5 826.5h1.9M105.5 825V828M103.6 826.5h1.9M105.5 826.5h1.9M110.5 825V828M108.6 826.5h1.9M110.5 826.5h1.9M115.5 824V827M113.6 826.5h1.9M115.5 824.5h1.9M120.5 823V826M118.6 824.5h1.9M120.5 824.5h1.9M125.5 822V825M123.6 824.5h1.9M125.5 822.5h1.9M131.5 821V824M129.6 822.5h1.9M131.5 822.5h1.9M135.5 820V823M133.6 822.5h1.9M135.5 820.5h1.9M143.5 812V815M141.6 814.5h1.9M143.5 814.5h1.9M148.5 812V816M146.6 814.5h1.9M148.5 814.5h1.9M154.5 812V815M152.6 814.5h1.9M154.5 812.5h1.9M159.5 811V814M157.6 812.5h1.9M159.5 812.5h1.9M164.5 805V813M162.6 812.5h1.9M164.5 807.5h1.9M169.5 805V809M167.6 807.5h1.9M169.5 806.5h1.9M175.5 804V808M173.6 806.5h1.9M175.5 805.5h1.9M180.5 802V808M178.6 805.5h1.9M180.5 806.5h1.9M191.5 804V807M189.6 806.5h1.9M191.5 804.5h1.9M196.5 803V806M194.6 804.5h1.9M196.5 804.5h1.9M206.5 777V790M204.6 790.5h1.9M206.5 778.5h1.9M211.5 774V782M209.6 778.5h1.9M211.5 775.5h1.9M217.5 771V779M215.6 775.5h1.9M217.5 772.5h1.9M222.5 768V773M220.6 772.5h1.9M222.5 770.5h1.9M227.5 766V774M225.6 770.5h1.9M227.5 766.5h1.9M232.5 755V765M230.6 764.5h1.9M232.5 759.5h1.9M237.5 757V761M235.6 759.5h1.9M237.5 758.5h1.9M242.5 753V760M240.6 758.5h1.9M242.5 754.5h1.9M247.5 745V757M245.6 754.5h1.9M247.5 746.5h1.9M253.5 741V750M251.6 746.5h1.9M253.5 742.5h1.9M258.5 731V743M256.6 742.5h1.9M258.5 734.5h1.9M263.5 731V738M261.6 734.5h1.9M263.5 732.5h1.9M269.5 724V732M267.6 732.5h1.9M269.5 732.5h1.9M273.5 727V737M271.6 732.5h1.9M273.5 736.5h1.9M279.5 733V746M277.6 736.5h1.9M279.5 738.5h1.9M289.5 738V742M287.6 740.5h1.9M289.5 742.5h1.9M294.5 740V745M292.6 742.5h1.9M294.5 744.5h1.9M299.5 743V757M297.6 744.5h1.9M299.5 752.5h1.9M304.5 750V755M302.6 752.5h1.9M304.5 754.5h1.9M310.5 753V759M308.6 754.5h1.9M310.5 758.5h1.9M315.5 756V759M313.6 758.5h1.9M315.5 756.5h1.9M321.5 754V757M319.6 756.5h1.9M321.5 754.5h1.9M326.5 752V757M324.6 754.5h1.9M326.5 756.5h1.9M331.5 741V781M329.6 756.5h1.9M331.5 780.5h1.9M336.5 774V787M334.6 780.5h1.9M336.5 778.5h1.9M341.5 775V780M339.6 778.5h1.9M341.5 779.5h1.9M346.5 777V781M344.6 779.5h1.9M346.5 780.5h1.9M351.5 779V783M349.6 780.5h1.9M351.5 780.5h1.9M357.5 778V781M355.6 780.5h1.9M357.5 780.5h1.9M362.5 779V782M360.6 780.5h1.9M362.5 782.5h1.9M367.5 782V785M365.6 782.5h1.9M367.5 784.5h1.9M373.5 783V791M371.6 784.5h1.9M373.5 786.5h1.9M378.5 783V790M376.6 786.5h1.9M378.5 790.5h1.9M383.5 784V796M381.6 790.5h1.9M383.5 792.5h1.9M389.5 790V795M387.6 792.5h1.9M389.5 793.5h1.9M398.5 789V799M396.6 794.5h1.9M398.5 790.5h1.9M404.5 785V789M402.6 788.5h1.9M404.5 786.5h1.9M409.5 784V786M407.6 786.5h1.9M409.5 786.5h1.9M415.5 785V789M413.6 786.5h1.9M415.5 788.5h1.9M420.5 788V794M418.6 788.5h1.9M420.5 792.5h1.9M425.5 789V794M423.6 792.5h1.9M425.5 790.5h1.9M430.5 788V793M428.6 790.5h1.9M430.5 788.5h1.9M436.5 785V792M434.6 788.5h1.9M436.5 786.5h1.9M441.5 781V786M439.6 786.5h1.9M441.5 782.5h1.9M446.5 779V782M444.6 782.5h1.9M446.5 780.5h1.9M451.5 778V781M449.6 780.5h1.9M451.5 780.5h1.9M456.5 779V784M454.6 780.5h1.9M456.5 780.5h1.9M461.5 773V785M459.6 780.5h1.9M461.5 774.5h1.9M467.5 768V774M465.6 774.5h1.9M467.5 768.5h1.9M472.5 765V770M470.6 768.5h1.9M472.5 766.5h1.9M477.5 763V768M475.6 766.5h1.9M477.5 764.5h1.9M482.5 760V763M480.6 762.5h1.9M482.5 760.5h1.9M487.5 759V762M485.6 760.5h1.9M487.5 760.5h1.9M492.5 756V760M490.6 760.5h1.9M492.5 756.5h1.9M498.5 744V755M496.6 754.5h1.9M498.5 744.5h1.9M504.5 733V745M502.6 744.5h1.9M504.5 744.5h1.9M509.5 735V763M507.6 744.5h1.9M509.5 756.5h1.9M519.5 749V756M517.6 752.5h1.9M519.5 750.5h1.9M524.5 745V748M522.6 748.5h1.9M524.5 746.5h1.9M529.5 742V747M527.6 746.5h1.9M529.5 744.5h1.9M535.5 738V750M533.6 744.5h1.9M535.5 740.5h1.9M540.5 738V742M538.6 740.5h1.9M540.5 738.5h1.9M545.5 734V740M543.6 738.5h1.9M545.5 740.5h1.9M550.5 739V742M548.6 740.5h1.9M550.5 742.5h1.9M556.5 740V745M554.6 742.5h1.9M556.5 744.5h1.9M560.5 741V747M558.6 744.5h1.9M560.5 742.5h1.9M576.5 720V732M574.6 728.5h1.9M576.5 720.5h1.9M581.5 716V722M579.6 720.5h1.9M581.5 722.5h1.9M587.5 717V745M585.6 722.5h1.9M587.5 732.5h1.9M597.5 727V732M595.6 730.5h1.9M597.5 732.5h1.9M602.5 729V735M600.6 732.5h1.9M602.5 730.5h1.9M607.5 727V730M605.6 730.5h1.9M607.5 730.5h1.9M612.5 727V733M610.6 730.5h1.9M612.5 732.5h1.9M617.5 740V744M615.6 740.5h1.9M617.5 742.5h1.9M623.5 741V744M621.6 742.5h1.9M623.5 744.5h1.9M628.5 742V745M626.6 744.5h1.9M628.5 744.5h1.9M634.5 741V748M632.6 744.5h1.9M634.5 746.5h1.9M639.5 744V747M637.6 746.5h1.9M639.5 744.5h1.9M644.5 739V743M642.6 742.5h1.9M644.5 740.5h1.9M659.5 752V756M657.6 754.5h1.9M659.5 752.5h1.9M665.5 750V753M663.6 752.5h1.9M665.5 750.5h1.9M670.5 748V752M668.6 750.5h1.9M670.5 751.5h1.9M680.5 739V752M678.6 750.5h1.9M680.5 740.5h1.9M686.5 720V738M684.6 738.5h1.9M686.5 722.5h1.9M691.5 717V726M689.6 722.5h1.9M691.5 726.5h1.9M696.5 723V734M694.6 726.5h1.9M696.5 728.5h1.9M701.5 725V730M699.6 728.5h1.9M701.5 730.5h1.9M706.5 731V737M704.6 732.5h1.9M706.5 735.5h1.9M711.5 732V738M709.6 735.5h1.9M711.5 732.5h1.9M717.5 730V733M715.6 732.5h1.9M717.5 732.5h1.9M732.5 730V732M730.6 732.5h1.9M732.5 732.5h1.9M737.5 732V734M735.6 732.5h1.9M737.5 734.5h1.9M743.5 735V738M741.6 736.5h1.9M743.5 736.5h1.9M748.5 728V736M746.6 736.5h1.9M748.5 728.5h1.9M754.5 720V733M752.6 728.5h1.9M754.5 720.5h1.9M759.5 706V719M757.6 718.5h1.9M759.5 706.5h1.9M763.5 702V710M761.6 706.5h1.9M763.5 707.5h1.9M769.5 704V710M767.6 707.5h1.9M769.5 710.5h1.9M774.5 706V722M772.6 710.5h1.9M774.5 712.5h1.9M779.5 709V714M777.6 712.5h1.9M779.5 711.5h1.9M785.5 709V713M783.6 711.5h1.9M785.5 712.5h1.9M790.5 711V715M788.6 712.5h1.9M790.5 714.5h1.9M795.5 713V717M793.6 714.5h1.9M795.5 714.5h1.9M800.5 709V716M798.6 714.5h1.9M800.5 710.5h1.9M805.5 703V707M803.6 706.5h1.9M805.5 704.5h1.9M811.5 703V706M809.6 704.5h1.9M811.5 704.5h1.9M816.5 702V705M814.6 704.5h1.9M816.5 702.5h1.9M821.5 701V703M819.6 702.5h1.9M821.5 702.5h1.9M826.5 703V706M824.6 704.5h1.9M826.5 704.5h1.9M831.5 701V703M829.6 702.5h1.9M831.5 702.5h1.9M836.5 700V702M834.6 702.5h1.9M836.5 702.5h1.9M842.5 702V704M840.6 702.5h1.9M842.5 702.5h1.9M847.5 695V703M845.6 702.5h1.9M847.5 696.5h1.9M853.5 689V699M851.6 696.5h1.9M853.5 690.5h1.9M858.5 682V687M856.6 686.5h1.9M858.5 686.5h1.9M863.5 684V691M861.6 686.5h1.9M863.5 687.5h1.9M868.5 685V689M866.6 687.5h1.9M868.5 687.5h1.9M873.5 684V690M871.6 687.5h1.9M873.5 686.5h1.9M878.5 682V690M876.6 686.5h1.9M878.5 686.5h1.9M883.5 683V689M881.6 686.5h1.9M883.5 688.5h1.9M888.5 686V694M886.6 688.5h1.9M888.5 694.5h1.9M893.5 690V698M891.6 694.5h1.9M893.5 691.5h1.9M898.5 689V693M896.6 691.5h1.9M898.5 692.5h1.9M904.5 689V694M902.6 692.5h1.9M904.5 694.5h1.9M909.5 691V696M907.6 694.5h1.9M909.5 692.5h1.9M914.5 691V693M912.6 692.5h1.9M914.5 692.5h1.9M920.5 689V692M918.6 692.5h1.9M920.5 692.5h1.9M930.5 685V692M928.6 690.5h1.9M930.5 688.5h1.9M935.5 685V692M933.6 688.5h1.9M935.5 688.5h1.9M941.5 687V689M939.6 688.5h1.9M941.5 688.5h1.9M946.5 689V692M944.6 690.5h1.9M946.5 692.5h1.9M951.5 690V693M949.6 692.5h1.9M951.5 692.5h1.9M956.5 689V696M954.6 692.5h1.9M956.5 690.5h1.9M961.5 672V689M959.6 688.5h1.9M961.5 672.5h1.9M967.5 667V677M965.6 672.5h1.9M967.5 668.5h1.9M972.5 662V669M970.6 668.5h1.9M972.5 668.5h1.9M977.5 666V673M975.6 668.5h1.9M977.5 666.5h1.9M983.5 664V667M981.6 666.5h1.9M983.5 664.5h1.9M988.5 656V665M986.6 664.5h1.9M988.5 656.5h1.9M993.5 650V659M991.6 656.5h1.9M993.5 650.5h1.9M998.5 632V666M996.6 650.5h1.9M998.5 638.5h1.9M1004.5 631V646M1002.6 638.5h1.9M1004.5 632.5h1.9M1009.5 629V635M1007.6 632.5h1.9M1009.5 630.5h1.9M1014.5 619V634M1012.6 630.5h1.9M1014.5 621.5h1.9M1019.5 616V626M1017.6 621.5h1.9M1019.5 623.5h1.9M1024.5 618V628M1022.6 623.5h1.9M1024.5 618.5h1.9M1029.5 608V617M1027.6 616.5h1.9M1029.5 608.5h1.9M1034.5 600V607M1032.6 606.5h1.9M1034.5 603.5h1.9M1040.5 598V608M1038.6 603.5h1.9M1040.5 606.5h1.9M1045.5 602V610M1043.6 606.5h1.9M1045.5 606.5h1.9M1055.5 602V606M1053.6 604.5h1.9M1055.5 606.5h1.9M1061.5 605V615M1059.6 606.5h1.9M1061.5 606.5h1.9M1066.5 593V612M1064.6 606.5h1.9M1066.5 594.5h1.9M1082.5 569V583M1080.6 576.5h1.9M1082.5 582.5h1.9M1087.5 577V588M1085.6 582.5h1.9M1087.5 587.5h1.9M1097.5 586V592M1095.6 589.5h1.9M1097.5 590.5h1.9M1103.5 585V594M1101.6 590.5h1.9M1103.5 586.5h1.9M1108.5 579V584M1106.6 584.5h1.9M1108.5 584.5h1.9M1113.5 576V591M1111.6 584.5h1.9M1113.5 590.5h1.9M1118.5 582V599M1116.6 590.5h1.9M1118.5 598.5h1.9M1123.5 598V656M1121.6 598.5h1.9M1123.5 654.5h1.9M1129.5 646V661M1127.6 654.5h1.9M1129.5 646.5h1.9M1134.5 633V651M1132.6 646.5h1.9M1134.5 640.5h1.9M1139.5 636V644M1137.6 640.5h1.9M1139.5 636.5h1.9M1144.5 622V636M1142.6 636.5h1.9M1144.5 622.5h1.9M1155.5 610V623M1153.6 616.5h1.9M1155.5 622.5h1.9M1160.5 622V637M1158.6 622.5h1.9M1160.5 630.5h1.9M1165.5 627V633M1163.6 630.5h1.9M1165.5 630.5h1.9M1170.5 628V633M1168.6 630.5h1.9M1170.5 632.5h1.9M1175.5 629V634M1173.6 632.5h1.9M1175.5 634.5h1.9M1180.5 635V643M1178.6 636.5h1.9M1180.5 640.5h1.9M1185.5 638V643M1183.6 640.5h1.9M1185.5 642.5h1.9M1196.5 626V640M1194.6 640.5h1.9M1196.5 628.5h1.9M1201.5 625V632M1199.6 628.5h1.9M1201.5 632.5h1.9M1206.5 628V640M1204.6 632.5h1.9M1206.5 628.5h1.9M1217.5 620V627M1215.6 626.5h1.9M1217.5 624.5h1.9M1222.5 618V629M1220.6 624.5h1.9M1222.5 618.5h1.9M1227.5 614V621M1225.6 618.5h1.9M1227.5 615.5h1.9M1232.5 612V618M1230.6 615.5h1.9M1232.5 612.5h1.9M1238.5 606V615M1236.6 612.5h1.9M1238.5 608.5h1.9M1243.5 603V612M1241.6 608.5h1.9M1243.5 612.5h1.9M1253.5 625V634M1251.6 630.5h1.9M1253.5 626.5h1.9M1259.5 618V627M1257.6 626.5h1.9M1259.5 618.5h1.9M1264.5 610V621M1262.6 618.5h1.9M1264.5 610.5h1.9M1269.5 600V612M1267.6 610.5h1.9M1269.5 600.5h1.9M1274.5 585V600M1272.6 600.5h1.9M1274.5 600.5h1.9M1280.5 602V617M1278.6 602.5h1.9M1280.5 604.5h1.9M1285.5 599V610M1283.6 604.5h1.9M1285.5 602.5h1.9M1290.5 595V608M1288.6 602.5h1.9M1290.5 601.5h1.9M1295.5 597V605M1293.6 601.5h1.9M1295.5 600.5h1.9M1301.5 597V603M1299.6 600.5h1.9M1301.5 598.5h1.9M1306.5 593V600M1304.6 598.5h1.9M1306.5 598.5h1.9M1311.5 596V599M1309.6 598.5h1.9M1311.5 598.5h1.9M1316.5 597V601M1314.6 598.5h1.9M1316.5 598.5h1.9M1322.5 587V601M1320.6 598.5h1.9M1322.5 588.5h1.9M1327.5 580V589M1325.6 588.5h1.9M1327.5 580.5h1.9M1332.5 555V579M1330.6 578.5h1.9M1332.5 556.5h1.9M1337.5 544V558M1335.6 556.5h1.9M1337.5 544.5h1.9M1342.5 528V548M1340.6 544.5h1.9M1342.5 530.5h1.9M1348.5 525V535M1346.6 530.5h1.9M1348.5 531.5h1.9M1353.5 523V539M1351.6 531.5h1.9M1353.5 524.5h1.9M1358.5 509V531M1356.6 524.5h1.9M1358.5 519.5h1.9M1363.5 513V525M1361.6 519.5h1.9M1363.5 514.5h1.9M1369.5 499V514M1367.6 514.5h1.9M1369.5 500.5h1.9M1374.5 490V507M1372.6 500.5h1.9M1374.5 498.5h1.9M1379.5 492V505M1377.6 498.5h1.9M1379.5 495.5h1.9M1384.5 489V501M1382.6 495.5h1.9M1384.5 491.5h1.9M1389.5 486V496M1387.6 491.5h1.9M1389.5 488.5h1.9M1400.5 494V505M1398.6 494.5h1.9M1400.5 502.5h1.9M1405.5 495V510M1403.6 502.5h1.9M1405.5 510.5h1.9M1410.5 512V556M1408.6 512.5h1.9M1410.5 521.5h1.9M1415.5 513V529M1413.6 521.5h1.9M1415.5 526.5h1.9M1420.5 524V529M1418.6 526.5h1.9M1420.5 524.5h1.9M1426.5 521V527M1424.6 524.5h1.9M1426.5 522.5h1.9M1431.5 515V522M1429.6 522.5h1.9M1431.5 520.5h1.9M1436.5 517V523M1434.6 520.5h1.9M1436.5 518.5h1.9M1446.5 494V507M1444.6 502.5h1.9M1446.5 494.5h1.9M1452.5 469V493M1450.6 492.5h1.9M1452.5 474.5h1.9M1457.5 465V482M1455.6 474.5h1.9M1457.5 482.5h1.9M1462.5 472V507M1460.6 482.5h1.9M1462.5 485.5h1.9M1468.5 470V500M1466.6 485.5h1.9M1468.5 470.5h1.9M1473.5 447V478M1471.6 470.5h1.9M1473.5 448.5h1.9M1478.5 436V461M1476.6 448.5h1.9M1478.5 451.5h1.9M1483.5 444V458M1481.6 451.5h1.9M1483.5 450.5h1.9M1488.5 445V455M1486.6 450.5h1.9M1488.5 454.5h1.9M1498.5 461V474M1496.6 468.5h1.9M1498.5 462.5h1.9M1503.5 439V470M1501.6 462.5h1.9M1503.5 440.5h1.9M1509.5 434V441M1507.6 440.5h1.9M1509.5 434.5h1.9M1514.5 425V436M1512.6 434.5h1.9M1514.5 426.5h1.9M1524.5 426V439M1522.6 432.5h1.9M1524.5 426.5h1.9M1529.5 405V425M1527.6 424.5h1.9M1529.5 406.5h1.9M1535.5 394V415M1533.6 406.5h1.9M1535.5 403.5h1.9M1540.5 393V413M1538.6 403.5h1.9M1540.5 394.5h1.9M1545.5 384V398M1543.6 394.5h1.9M1545.5 384.5h1.9M1550.5 370V392M1548.6 384.5h1.9M1550.5 386.5h1.9M1555.5 371V402M1553.6 386.5h1.9M1555.5 388.5h1.9M1561.5 383V393M1559.6 388.5h1.9M1561.5 384.5h1.9M1571.5 382V392M1569.6 387.5h1.9M1571.5 382.5h1.9M1576.5 378V385M1574.6 382.5h1.9M1576.5 384.5h1.9M1582.5 380V406M1580.6 384.5h1.9M1582.5 406.5h1.9M1587.5 393V418M1585.6 406.5h1.9M1587.5 394.5h1.9M1592.5 386V400M1590.6 394.5h1.9M1592.5 396.5h1.9M1597.5 391V401M1595.6 396.5h1.9M1597.5 398.5h1.9M1608.5 389V399M1606.6 394.5h1.9M1608.5 390.5h1.9M1618.5 344V375M1616.6 374.5h1.9M1618.5 356.5h1.9M1623.5 347V365M1621.6 356.5h1.9M1623.5 359.5h1.9M1628.5 355V363M1626.6 359.5h1.9M1628.5 361.5h1.9M1633.5 354V368M1631.6 361.5h1.9M1633.5 362.5h1.9M1639.5 357V366M1637.6 362.5h1.9M1639.5 364.5h1.9M1644.5 358V369M1642.6 364.5h1.9M1644.5 368.5h1.9M1649.5 364V378M1647.6 368.5h1.9M1649.5 364.5h1.9M1654.5 356V369M1652.6 364.5h1.9M1654.5 356.5h1.9M1660.5 326V366M1658.6 356.5h1.9M1660.5 328.5h1.9M1665.5 319V336M1663.6 328.5h1.9M1665.5 320.5h1.9M1670.5 306V328M1668.6 320.5h1.9M1670.5 316.5h1.9M1675.5 306V326M1673.6 316.5h1.9M1675.5 326.5h1.9M1680.5 321V380M1678.6 326.5h1.9M1680.5 380.5h1.9M1686.5 365V402M1684.6 380.5h1.9M1686.5 392.5h1.9M1696.5 400V410M1694.6 404.5h1.9M1696.5 406.5h1.9M1701.5 396V417M1699.6 406.5h1.9M1701.5 406.5h1.9M1707.5 400V411M1705.6 406.5h1.9M1707.5 410.5h1.9M1712.5 406V424M1710.6 410.5h1.9M1712.5 424.5h1.9M1717.5 420V448M1715.6 424.5h1.9M1717.5 424.5h1.9M1722.5 419V430M1720.6 424.5h1.9M1722.5 430.5h1.9M1728.5 426V444M1726.6 430.5h1.9M1728.5 430.5h1.9M1733.5 423V437M1731.6 430.5h1.9M1733.5 424.5h1.9M1743.5 393V423M1741.6 408.5h1.9M1743.5 422.5h1.9M1748.5 423V437M1746.6 424.5h1.9M1748.5 424.5h1.9M1753.5 418V427M1751.6 424.5h1.9M1753.5 419.5h1.9M1758.5 410V428M1756.6 419.5h1.9M1758.5 422.5h1.9M1764.5 412V431M1762.6 422.5h1.9M1764.5 429.5h1.9" stroke="#0c0c14" stroke-width="1.3" fill="none"/>
<path d="M37.5 822V825M35.6 824.5h1.9M37.5 824.5h1.9M186.5 805V807M184.6 806.5h1.9M186.5 806.5h1.9M284.5 733V742M282.6 738.5h1.9M284.5 740.5h1.9M514.5 749V764M512.6 756.5h1.9M514.5 752.5h1.9M592.5 725V740M590.6 732.5h1.9M592.5 730.5h1.9M654.5 743V756M652.6 744.5h1.9M654.5 754.5h1.9M722.5 730V733M720.6 732.5h1.9M722.5 732.5h1.9M727.5 731V736M725.6 732.5h1.9M727.5 732.5h1.9M1050.5 604V609M1048.6 606.5h1.9M1050.5 604.5h1.9M1092.5 582V592M1090.6 587.5h1.9M1092.5 589.5h1.9M1190.5 640V646M1188.6 642.5h1.9M1190.5 640.5h1.9M1248.5 610V642M1246.6 612.5h1.9M1248.5 630.5h1.9M1394.5 482V494M1392.6 488.5h1.9M1394.5 494.5h1.9M1493.5 446V473M1491.6 454.5h1.9M1493.5 468.5h1.9M1566.5 377V389M1564.6 384.5h1.9M1566.5 387.5h1.9M1603.5 391V404M1601.6 398.5h1.9M1603.5 394.5h1.9M1691.5 379V404M1689.6 392.5h1.9M1691.5 404.5h1.9" stroke="#ff1414" stroke-width="1.5" fill="none"/>
<path d="M78.5 823V825M76.6 824.5h1.9M78.5 824.5h1.9M138.5 810V820M136.6 820.5h1.9M138.5 814.5h1.9M199.5 798V803M197.6 802.5h1.9M199.5 798.5h1.9M202.5 790V800M200.6 798.5h1.9M202.5 790.5h1.9M394.5 791V795M392.6 793.5h1.9M394.5 794.5h1.9M566.5 731V735M564.6 734.5h1.9M566.5 732.5h1.9M571.5 728V735M569.6 732.5h1.9M571.5 728.5h1.9M648.5 738V743M646.6 740.5h1.9M648.5 742.5h1.9M675.5 749V753M673.6 751.5h1.9M675.5 750.5h1.9M925.5 690V694M923.6 692.5h1.9M925.5 690.5h1.9M1071.5 580V595M1069.6 594.5h1.9M1071.5 580.5h1.9M1076.5 569V583M1074.6 580.5h1.9M1076.5 576.5h1.9M1149.5 614V621M1147.6 620.5h1.9M1149.5 616.5h1.9M1211.5 625V631M1209.6 628.5h1.9M1211.5 626.5h1.9M1441.5 501V517M1439.6 516.5h1.9M1441.5 502.5h1.9M1519.5 410V435M1517.6 426.5h1.9M1519.5 432.5h1.9M1613.5 374V393M1611.6 390.5h1.9M1613.5 374.5h1.9M1738.5 399V422M1736.6 422.5h1.9M1738.5 408.5h1.9" stroke="#169a16" stroke-width="1.5" fill="none"/>
<rect x="194" y="802.5" width="14" height="6.5" fill="#116a1f" stroke="#3f7a1c" stroke-width="1.2"/><text x="201" y="807.7" text-anchor="middle" font-size="5.1" font-weight="bold" fill="#e4e4f8" fill-opacity=".92" textLength="10.1" lengthAdjust="spacingAndGlyphs">EXIT</text>
<rect x="194.4" y="819.7" width="2.4" height="13.3" fill="#0f6a2a"/><rect x="186" y="810" width="20" height="9.7" fill="#116a1f" stroke="#3f7a1c" stroke-width="1.2"/><text x="196" y="817.8" text-anchor="middle" font-size="7.6" font-weight="bold" fill="#e4e4f8" fill-opacity=".92" textLength="14.4" lengthAdjust="spacingAndGlyphs">EXIT</text>
<rect x="570.9" y="743" width="2.4" height="9" fill="#0f6a2a"/><rect x="565" y="737" width="12.5" height="6" fill="#116a1f" stroke="#3f7a1c" stroke-width="1.2"/><text x="571.2" y="741.8" text-anchor="middle" font-size="4.7" font-weight="bold" fill="#e4e4f8" fill-opacity=".92" textLength="9" lengthAdjust="spacingAndGlyphs">EXIT</text>
<rect x="564.9" y="749" width="2.4" height="13.5" fill="#0f6a2a"/><rect x="556" y="740" width="20" height="9" fill="#116a1f" stroke="#3f7a1c" stroke-width="1.2"/><text x="566" y="747.2" text-anchor="middle" font-size="7" font-weight="bold" fill="#e4e4f8" fill-opacity=".92" textLength="14.4" lengthAdjust="spacingAndGlyphs">EXIT</text>
<rect x="653.9" y="729" width="2.4" height="9" fill="#ff2a3a"/><rect x="648.7" y="722.5" width="12.6" height="6.5" fill="#ff2a3a" stroke="#ff1a2a" stroke-width="1.2"/><text x="655" y="727.7" text-anchor="middle" font-size="5.1" font-weight="bold" fill="#e4e4f8" fill-opacity=".92" textLength="9.1" lengthAdjust="spacingAndGlyphs">EXIT</text>
<rect x="720.9" y="709.7" width="2.4" height="13.3" fill="#ff2a3a"/><rect x="712.5" y="700" width="19.2" height="9.7" fill="#ff2a3a" stroke="#ff1a2a" stroke-width="1.2"/><text x="722.1" y="707.8" text-anchor="middle" font-size="7.6" font-weight="bold" fill="#e4e4f8" fill-opacity=".92" textLength="13.8" lengthAdjust="spacingAndGlyphs">EXIT</text>
<rect x="725.9" y="716.7" width="2.4" height="9.3" fill="#ff2a3a"/><rect x="721" y="710" width="12.7" height="6.7" fill="#ff2a3a" stroke="#ff1a2a" stroke-width="1.2"/><text x="727.4" y="715.4" text-anchor="middle" font-size="5.2" font-weight="bold" fill="#e4e4f8" fill-opacity=".92" textLength="9.1" lengthAdjust="spacingAndGlyphs">EXIT</text>
<rect x="1069.5" y="587.7" width="12.5" height="6.1" fill="#116a1f" stroke="#3f7a1c" stroke-width="1.2"/><text x="1075.8" y="592.6" text-anchor="middle" font-size="4.8" font-weight="bold" fill="#e4e4f8" fill-opacity=".92" textLength="9" lengthAdjust="spacingAndGlyphs">EXIT</text>
<rect x="1069.9" y="605.4" width="2.4" height="14" fill="#0f6a2a"/><rect x="1060.8" y="596" width="19.2" height="9.4" fill="#116a1f" stroke="#3f7a1c" stroke-width="1.2"/><text x="1070.4" y="603.5" text-anchor="middle" font-size="7.3" font-weight="bold" fill="#e4e4f8" fill-opacity=".92" textLength="13.8" lengthAdjust="spacingAndGlyphs">EXIT</text>
<rect x="1190.4" y="628" width="2.4" height="9" fill="#ff2a3a"/><rect x="1185" y="621" width="13" height="7" fill="#ff2a3a" stroke="#ff1a2a" stroke-width="1.2"/><text x="1191.5" y="626.6" text-anchor="middle" font-size="5.5" font-weight="bold" fill="#e4e4f8" fill-opacity=".92" textLength="9.4" lengthAdjust="spacingAndGlyphs">EXIT</text>
<rect x="1247.6" y="600" width="2.4" height="10" fill="#ff2a3a"/><rect x="1242.5" y="594" width="12.5" height="6" fill="#ff2a3a" stroke="#ff1a2a" stroke-width="1.2"/><text x="1248.8" y="598.8" text-anchor="middle" font-size="4.7" font-weight="bold" fill="#e4e4f8" fill-opacity=".92" textLength="9" lengthAdjust="spacingAndGlyphs">EXIT</text>
<rect x="1516.9" y="447.9" width="2.4" height="14.1" fill="#0f6a2a"/><rect x="1509" y="439.3" width="19.5" height="8.6" fill="#116a1f" stroke="#3f7a1c" stroke-width="1.2"/><text x="1518.8" y="446.2" text-anchor="middle" font-size="6.7" font-weight="bold" fill="#e4e4f8" fill-opacity=".92" textLength="14" lengthAdjust="spacingAndGlyphs">EXIT</text>
<rect x="1601.4" y="377.9" width="2.4" height="9.1" fill="#ff2a3a"/><rect x="1596" y="371.6" width="12.5" height="6.3" fill="#ff2a3a" stroke="#ff1a2a" stroke-width="1.2"/><text x="1602.2" y="376.6" text-anchor="middle" font-size="4.9" font-weight="bold" fill="#e4e4f8" fill-opacity=".92" textLength="9" lengthAdjust="spacingAndGlyphs">EXIT</text>
<rect x="1689.9" y="365" width="2.4" height="9.6" fill="#ff2a3a"/><rect x="1685" y="359" width="12.6" height="6" fill="#ff2a3a" stroke="#ff1a2a" stroke-width="1.2"/><text x="1691.3" y="363.8" text-anchor="middle" font-size="4.7" font-weight="bold" fill="#e4e4f8" fill-opacity=".92" textLength="9.1" lengthAdjust="spacingAndGlyphs">EXIT</text>
<path d="M75 832.5L87.2 844.7h-8v16.4h-8.4v-16.4h-8z" fill="#0a0aff"/>
<path d="M180.8 767.5h8.4v15.8h8L185 795.7L172.8 783.3h8z" fill="#ff0a0a"/>
<path d="M280.8 703.7h6.4v12.4h6L284 725.9L274.8 716.1h6z" fill="#ff0a0a"/>
<path d="M392.5 804L404.7 816.2h-8v16.4h-8.4v-16.4h-8z" fill="#0a0aff"/>
<path d="M508.3 711h8.4v15.8h8L512.5 739.2L500.3 726.8h8z" fill="#ff0a0a"/>
<path d="M588.3 696h6.4v12.4h6L591.5 718.2L582.3 708.4h6z" fill="#ff0a0a"/>
<path d="M647.5 750L659.7 762.2h-8v16.4h-8.4v-16.4h-8z" fill="#0a0aff"/>
<path d="M673.5 761.3L685.7 773.5h-8v16.4h-8.4v-16.4h-8z" fill="#0a4b0a"/>
<path d="M924.7 697.6L930.9 703.8h-3.8v8.6h-4.8v-8.6h-3.8z" fill="#0a4b0a"/>
<path d="M1043.8 566.4h8.4v15.8h8L1048 594.6L1035.8 582.2h8z" fill="#ff0a0a"/>
<path d="M1088.1 554.3h6.4v12.4h6L1091.3 576.5L1082.1 566.7h6z" fill="#ff0a0a"/>
<path d="M1148 629L1160.2 641.2h-8v16.4h-8.4v-16.4h-8z" fill="#0a4b0a"/>
<path d="M1211 634L1217.2 640.2h-3.8v8.6h-4.8v-8.6h-3.8z" fill="#0a4b0a"/>
<path d="M1389.8 454h6.4v12.4h6L1393 476.2L1383.8 466.4h6z" fill="#ff0a0a"/>
<path d="M1440 525L1452.2 537.2h-8v16.4h-8.4v-16.4h-8z" fill="#0a0aff"/>
<path d="M1488.3 417.3h6.4v12.4h6L1491.5 439.5L1482.3 429.7h6z" fill="#ff0a0a"/>
<path d="M1562.2 348.7h6.4v12.4h6L1565.4 370.9L1556.2 361.1h6z" fill="#ff0a0a"/>
<path d="M1611 400.4L1623.2 412.6h-8v16.4h-8.4v-16.4h-8z" fill="#0a0aff"/>
<path d="M1736 430.4L1748.2 442.6h-8v16.4h-8.4v-16.4h-8z" fill="#0a4b0a"/>
<g font-size="15.35" fill="#14141c" text-anchor="middle">
<text x="75" y="885">Buy Swing B</text>
<text x="185" y="755.8">Sell Double Swing</text>
<text x="200.5" y="837">Close Swing B</text>
<text x="196.7" y="854.7">Close Swing A</text>
<text x="285" y="694.5">Sell Swing A</text>
<text x="393" y="856.5">Buy Swing B</text>
<text x="394" y="875">Close Swing A</text>
<text x="513" y="699.5">Sell Double Swing</text>
<text x="592.5" y="686.7">Sell Swing A</text>
<text x="570.5" y="771.3">Close Swing B</text>
<text x="566.7" y="784">Close Swing A</text>
<text x="654.7" y="716.7">Close Swing B</text>
<text x="722.8" y="691.7">Close Swing A</text>
<text x="727" y="704">Close Swing B</text>
<text x="648.7" y="801.7">Buy Swing B</text>
<text x="675" y="813.3">Buy Double Swing</text>
<text x="649" y="820.8">Close Swing A</text>
<text x="925" y="730.8">Buy Swing B</text>
<text x="1092.4" y="544.6">Sell Swing A</text>
<text x="1049.4" y="554.7">Sell Double Swing</text>
<text x="1075.4" y="621.8">Close Swing B</text>
<text x="1071.3" y="640.8">Close Swing A</text>
<text x="1148.5" y="680.7">Buy Double Swing</text>
<text x="1191" y="615.6">Close Swing B</text>
<text x="1211" y="667.3">Buy Swing B</text>
<text x="1248" y="588.7">Close Swing B</text>
<text x="1393.7" y="445">Sell Swing A</text>
<text x="1440.5" y="577.5">Buy Swing B</text>
<text x="1441" y="596">Close Swing A</text>
<text x="1492.7" y="408.6">Sell Swing A</text>
<text x="1519" y="483.4">Close Swing A</text>
<text x="1566.5" y="339.6">Sell Swing A</text>
<text x="1601.5" y="365.8">Close Swing B</text>
<text x="1612.5" y="452.3">Buy Swing B</text>
<text x="1612.7" y="471.2">Close Swing A</text>
<text x="1690.6" y="353.6">Close Swing B</text>
<text x="1737" y="482.5">Buy Double Swing</text>
</g>
</g>
<path d="M1851.5 256V879.5M1851 885.8h10.500" stroke="#111" stroke-width="1.6" fill="none"/>
<path d="M1851 879.4h5M1851 868.4h5M1851 857.5h5M1851 846.6h10M1851 835.7h5M1851 824.8h5M1851 813.8h5M1851 802.9h5M1851 792h10M1851 781.1h5M1851 770.2h5M1851 759.2h5M1851 748.3h5M1851 737.4h10M1851 726.5h5M1851 715.6h5M1851 704.6h5M1851 693.7h5M1851 682.8h10M1851 671.9h5M1851 661h5M1851 650h5M1851 639.1h5M1851 628.2h10M1851 617.3h5M1851 606.4h5M1851 595.4h5M1851 584.5h5M1851 573.6h10M1851 562.7h5M1851 551.8h5M1851 540.8h5M1851 529.9h5M1851 519h10M1851 508.1h5M1851 497.2h5M1851 486.2h5M1851 475.3h5M1851 464.4h10M1851 453.5h5M1851 442.6h5M1851 431.6h5M1851 420.7h5M1851 409.8h10M1851 398.9h5M1851 388h5M1851 377h5M1851 366.1h5M1851 355.2h10M1851 344.3h5M1851 333.4h5M1851 322.4h5M1851 311.5h5M1851 300.6h10M1851 289.7h5M1851 278.8h5M1851 267.8h5" stroke="#111" stroke-width="1.3"/>
<g font-size="14.9" fill="#14141c" text-anchor="end">
<text x="1908.3" y="852.9">1.0</text>
<text x="1908.3" y="798.3">1.5</text>
<text x="1908.3" y="743.7">2.0</text>
<text x="1908.3" y="689.1">2.5</text>
<text x="1908.3" y="634.5">3.0</text>
<text x="1908.3" y="579.9">3.5</text>
<text x="1908.3" y="525.3">4.0</text>
<text x="1908.3" y="470.7">4.5</text>
<text x="1908.3" y="416.1">5.0</text>
<text x="1908.3" y="361.5">5.5</text>
<text x="1908.3" y="306.9">6.0</text>
</g>
<rect x="1855.6" y="418.7" width="52.2" height="20.2" fill="#000"/>
<text x="1881.8" y="434.3" text-anchor="middle" font-size="13.4" fill="#ff1a1a">4.81500</text><rect x="38" y="888" width="1876" height="27" fill="#fff"/>
<rect x="39" y="888" width="98" height="26" fill="url(#hR)"/>
<rect x="137" y="888" width="1632" height="26" fill="url(#hG)"/>
<path d="M38.5 887V915.5M137 887V914M1769 888V914" stroke="#111" stroke-width="1.6" fill="none"/>
<path d="M38 915H1769" stroke="#111" stroke-width="1.8"/>
<path d="M38 887.6H1914" stroke="#9a9a9a" stroke-width="1.2"/>
<text x="86" y="908.7" text-anchor="middle" font-size="19.7" fill="#16161e">Bearish</text>
<text x="952" y="908.8" text-anchor="middle" font-size="19.2" fill="#16161e">Bullish</text>
<rect x="38" y="915.5" width="1812" height="25" fill="#fff"/>
<path d="M38 940.5H1850" stroke="#777" stroke-width="1.4"/><path d="M1850.300 916V941" stroke="#222" stroke-width="1.400"/>
<path d="M1769 915.2H1914" stroke="#555" stroke-width="1.2"/>
<path d="M113.5 916V940M228.5 916V940M332.5 916V940M452.5 916V940M546.5 916V940M660.5 916V940M774.5 916V940M884.5 916V940M1004.5 916V940M1113.5 916V940M1228.5 916V940M1343.5 916V940M1442.5 916V940M1555.5 916V940M1665.5 916V940M1774.5 916V940" stroke="#222" stroke-width="1.5"/>
<path d="M40.7 916v5.5M66.7 916v5.5M93.3 916v5.5M138.3 916v5.5M165 916v5.5M191.7 916v5.5M218.3 916v5.5M243.3 916v5.5M270 916v5.5M296.7 916v5.5M322.7 916v5.5M346.7 916v5.5M373.3 916v5.5M399.3 916v5.5M426 916v5.5M473.3 916v5.5M499.3 916v5.5M525.3 916v5.5M566.7 916v5.5M592.7 916v5.5M619 916v5.5M645 916v5.5M670.7 916v5.5M696.7 916v5.5M722.7 916v5.5M749.3 916v5.5M801 916v5.5M826.7 916v5.5M853.3 916v5.5M880 916v5.5M905 916v5.5M931 916v5.5M957.3 916v5.5M983.3 916v5.5M1009.3 916v5.5M1035.7 916v5.5M1061.7 916v5.5M1087.7 916v5.5M1139.3 916v5.5M1165.7 916v5.5M1191.7 916v5.5M1217.7 916v5.5M1243.3 916v5.5M1270 916v5.5M1296 916v5.5M1322 916v5.5M1348.3 916v5.5M1374.3 916v5.5M1400.7 916v5.5M1426.7 916v5.5M1462.7 916v5.5M1489 916v5.5M1515 916v5.5M1541 916v5.5M1567.3 916v5.5M1593.3 916v5.5M1619.3 916v5.5M1645 916v5.5M1671 916v5.5M1696.7 916v5.5M1723.3 916v5.5M1749.3 916v5.5M1801 916v5.5M1827.3 916v5.5" stroke="#111" stroke-width="1.5"/>
<g font-size="15.2" fill="#14141c">
<text x="78.5" y="935.5" text-anchor="end">ember</text>
<text x="115.5" y="935.5">2023</text>
<text x="230.5" y="935.5">February</text>
<text x="334.5" y="935.5">March</text>
<text x="454.5" y="935.5">April</text>
<text x="548.5" y="935.5">May</text>
<text x="662.5" y="935.5">June</text>
<text x="776.5" y="935.5">July</text>
<text x="886.5" y="935.5">August</text>
<text x="1006.5" y="935.5">September</text>
<text x="1115.5" y="935.5">October</text>
<text x="1230.5" y="935.5">November</text>
<text x="1345.5" y="935.5">December</text>
<text x="1444.5" y="935.5">2024</text>
<text x="1557.5" y="935.5">February</text>
<text x="1667.5" y="935.5">March</text>
<text x="1776.5" y="935.5">April</text>
</g></svg>
</body></html>
